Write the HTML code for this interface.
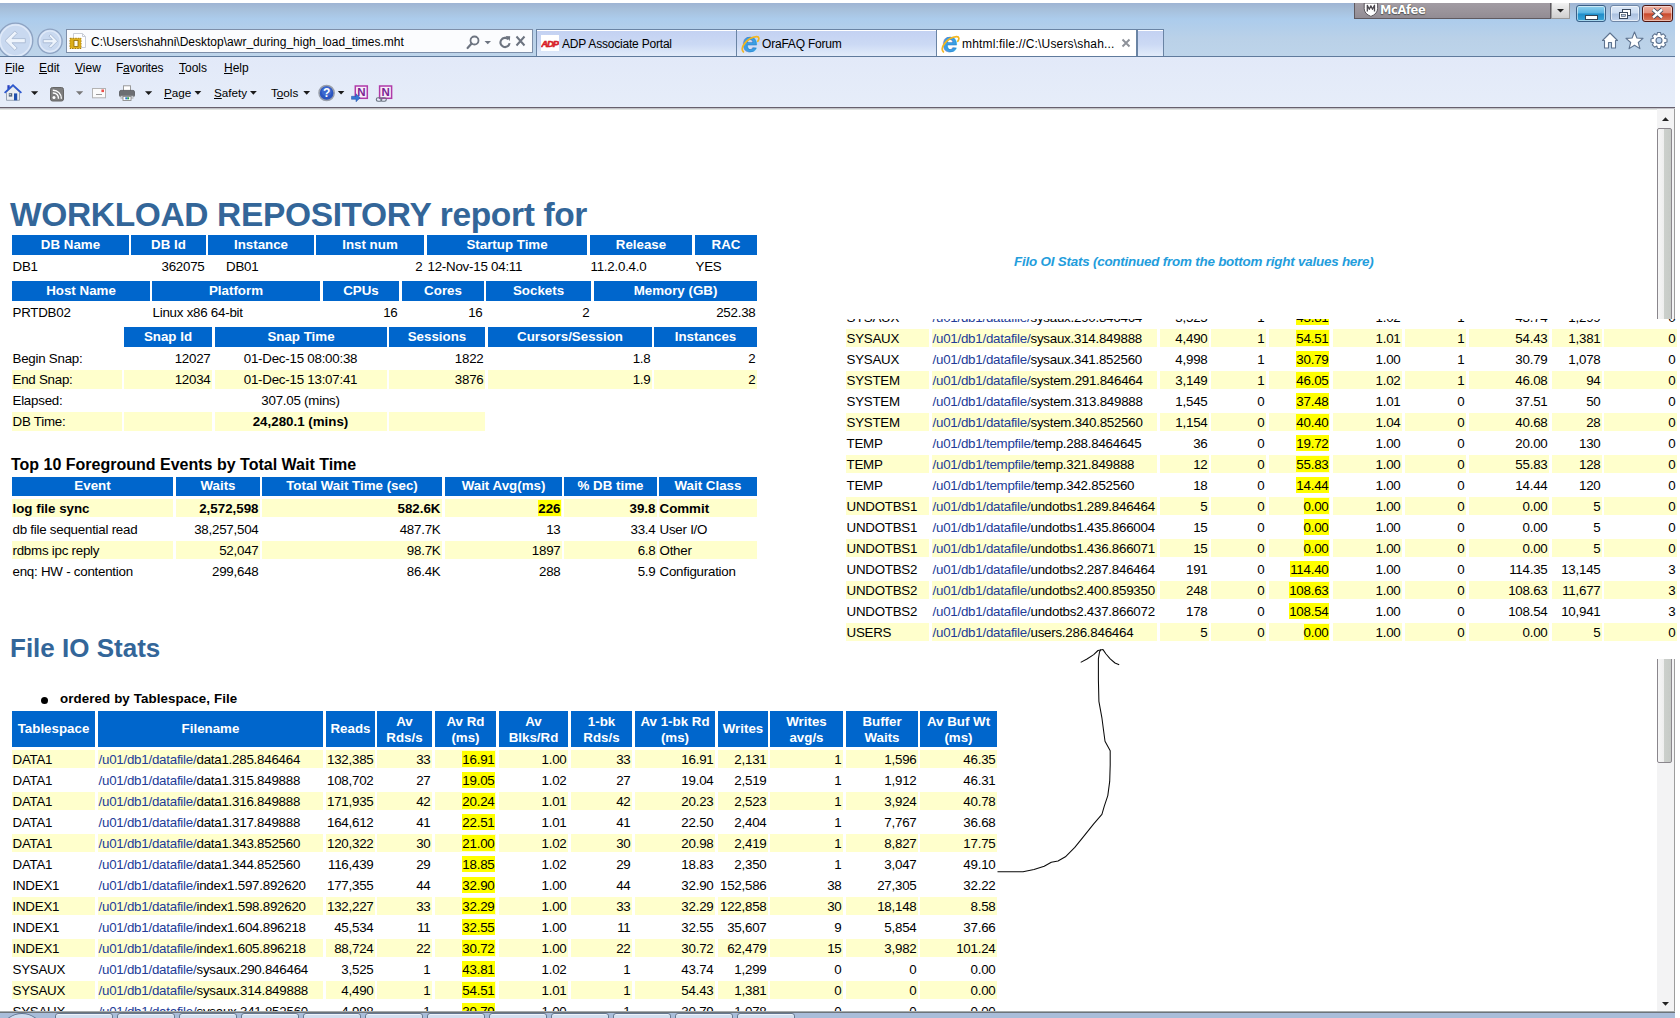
<!DOCTYPE html>
<html lang="en"><head><meta charset="utf-8"><title>AWR report - Internet Explorer</title>
<style>
html,body{margin:0;padding:0;background:#fff;}
body{width:1680px;height:1018px;overflow:hidden;position:relative;font-family:"Liberation Sans",sans-serif;font-size:13.33px;color:#000;}
.abs{position:absolute;}
#win{position:absolute;left:0;top:3px;width:1675px;height:1015px;overflow:hidden;background:#fff;}
/* ---------- chrome ---------- */
#titlebg{position:absolute;left:0;top:0;width:1675px;height:54px;background:linear-gradient(#9eb4d3 0px,#a6bfda 6px,#acccec 16px,#bad1e8 36px,#bdd4ea 54px);}
#toolbg{position:absolute;left:0;top:54px;width:1675px;height:50px;background:linear-gradient(#e2e9f8,#e6edf9);}
#chromeline{position:absolute;left:0;top:104px;width:1675px;height:3px;background:linear-gradient(#67606c 0,#67606c 1px,#c2c2c8 1px,#c2c2c8 2px,#e2e5e2 2px);}
.ui{font-family:"Liberation Sans","DejaVu Sans",sans-serif;font-size:12px;color:#000;white-space:nowrap;}
.menu span{position:absolute;top:0;}
.menu u{text-decoration:underline;}
.tab{position:absolute;top:26px;height:27px;box-sizing:border-box;border:1px solid #6a84a4;border-bottom:none;background:linear-gradient(#ffffff 0,#ffffff 1.5px,#c4d2f2 1.5px,#cbd9f4 14px,#e2ecfa 26px);}
.tab.act{background:#fff;border-color:#6a84a4;}
.tab .t{position:absolute;left:25px;top:7px;font-size:12px;letter-spacing:-0.2px;}
/* ---------- report ---------- */
table.awr{position:absolute;border-collapse:separate;border-spacing:0;table-layout:fixed;}
table.awr th,table.awr td{box-sizing:border-box;border:0 solid transparent;background-clip:padding-box;white-space:nowrap;overflow:hidden;}
table.awr th{background-color:#0066cc;color:#fff;font-weight:bold;font-size:13.33px;padding:0 0 1px 0;text-align:center;vertical-align:middle;line-height:16px;letter-spacing:0;}
table.awr td{font-size:13.33px;letter-spacing:-0.24px;padding:0 1.5px 0 0.5px;vertical-align:top;text-align:left;}
table.awr td.r{text-align:right;}
table.awr td.c{text-align:center;}
table.awr tr.y td{background-color:#ffffcc;}
table.awr td.nb{background-color:transparent !important;}
table.awr td b{letter-spacing:0;}
.hl{background:#ffff00;box-shadow:0 -1px 0 #ffff00;}
a.lk{color:#223c98;text-decoration:none;}
</style></head><body>
<div id="win">
<div id="titlebg"></div>
<div id="toolbg"></div>
<div id="chromeline"></div>
<!-- back / forward -->
<svg class="abs" style="left:0;top:18px" width="66" height="36" viewBox="0 0 66 36">
  <circle cx="15.5" cy="19.5" r="17.300" fill="#c9d9f0" stroke="#8ea3c2" stroke-width="1.3"/>
  <circle cx="15.5" cy="19.5" r="15.400" fill="none" stroke="#dfe9f8" stroke-width="1.5"/>
  <path d="M5 19.700 L14.8 10 L17.200 12.400 L12 17.600 H25.3 V21.800 H12 L17.200 27 L14.8 29.400 Z" fill="#eef4fc" stroke="#a8b9d3" stroke-width="0.9" stroke-linejoin="round"/>
  <circle cx="50" cy="20.200" r="12.100" fill="#c9d9f0" stroke="#8ea3c2" stroke-width="1.3"/>
  <circle cx="50" cy="20.200" r="10.300" fill="none" stroke="#dfe9f8" stroke-width="1.3"/>
  <path d="M57.6 20.200 L50.700 13.300 L48.900 15.100 L52.400 18.600 H43.200 V21.800 H52.400 L48.900 25.300 L50.700 27.100 Z" fill="#eef4fc" stroke="#a8b9d3" stroke-width="0.9" stroke-linejoin="round"/>
</svg>
<!-- address bar -->
<div class="abs" style="left:66px;top:26px;width:467px;height:24px;box-sizing:border-box;border:1px solid #7e8fa9;background:#fbfcfe;"></div>
<svg class="abs" style="left:69px;top:29px" width="18" height="18" viewBox="0 0 18 18">
  <path d="M4.500 1.500 H13.500 L16.500 4.500 V15.500 H4.500 Z" fill="#ffffff" stroke="#c9cdd6" stroke-width="1"/>
  <path d="M13.500 1.500 V4.500 H16.500" fill="none" stroke="#c9cdd6" stroke-width="1"/>
  <rect x="1" y="6.300" width="11" height="10.200" fill="#d9a916" stroke="#a97d08" stroke-width="1" stroke-dasharray="1.600 1"/>
  <rect x="1.600" y="6.900" width="9.800" height="9" fill="#dcae1a"/>
  <rect x="5" y="8.500" width="4" height="6" fill="#fffdf2" stroke="#8f6a06" stroke-width="0.8"/>
</svg>
<div class="abs ui" style="left:91px;top:32px;font-size:12px;">C:\Users\shahni\Desktop\awr_during_high_load_times.mht</div>
<svg class="abs" style="left:462px;top:30px" width="68" height="18" viewBox="0 0 68 18">
  <circle cx="12.5" cy="7.5" r="4" fill="none" stroke="#6d7480" stroke-width="1.8"/>
  <path d="M9.6 10.6 L5.6 15" stroke="#6d7480" stroke-width="2.2" stroke-linecap="round"/>
  <path d="M22.5 8 H29 L25.75 11.2 Z" fill="#6d7480"/>
  <path d="M46.3 6.2 A4.6 4.6 0 1 0 47.6 10.2" fill="none" stroke="#6d7480" stroke-width="2.100"/>
  <path d="M43.5 3 L48.2 3.2 L47.8 8 Z" fill="#6d7480"/>
  <path d="M54.5 3.5 L62.5 12.5 M62.5 3.5 L54.5 12.5" stroke="#6d7480" stroke-width="2"/>
</svg>
<!-- tabs -->
<div class="abs" style="left:0;top:53px;width:1675px;height:1px;background:#5f7a9c;"></div>
<div class="tab" style="left:536px;width:201px;"><div class="t ui">ADP Associate Portal</div></div>
<div class="tab" style="left:736px;width:201px;"><div class="t ui">OraFAQ Forum</div></div>
<div class="tab act" style="left:936px;width:201px;"><div class="t ui" style="letter-spacing:0.18px">mhtml:file://C:\Users\shah...</div></div>
<div class="tab" style="left:1137px;width:27px;"></div>
<!-- ADP logo -->
<svg class="abs" style="left:541px;top:32px" width="18" height="16" viewBox="0 0 18 16">
  <rect width="18" height="16" fill="#fff"/>
  <text x="8.600" y="12.300" font-family="Liberation Sans,sans-serif" font-size="9.500" font-weight="bold" font-style="italic" fill="#d81f2a" stroke="#d81f2a" stroke-width="0.600" text-anchor="middle" letter-spacing="-1.200">ADP</text>
</svg>
<!-- IE logos -->
<svg class="abs" style="left:741px;top:32px" width="19" height="19" viewBox="0 0 19 19">
  <text x="1.200" y="16.600" font-family="Liberation Sans,sans-serif" font-size="27" font-weight="bold" fill="#3c9fe3">e</text>
  <text x="1.200" y="16.600" font-family="Liberation Sans,sans-serif" font-size="27" font-weight="bold" fill="none" stroke="#1e78c8" stroke-width="0.500">e</text>
  <path d="M2.400 16.800 C-1.500 13 6 2.500 15.500 1.600 C18.500 1.500 18.300 4.300 16.800 6.300" fill="none" stroke="#f3b61f" stroke-width="1.700" stroke-linecap="round"/>
</svg>
<svg class="abs" style="left:941px;top:32px" width="19" height="19" viewBox="0 0 19 19">
  <text x="1.200" y="16.600" font-family="Liberation Sans,sans-serif" font-size="27" font-weight="bold" fill="#3c9fe3">e</text>
  <text x="1.200" y="16.600" font-family="Liberation Sans,sans-serif" font-size="27" font-weight="bold" fill="none" stroke="#1e78c8" stroke-width="0.500">e</text>
  <path d="M2.400 16.800 C-1.500 13 6 2.500 15.500 1.600 C18.500 1.500 18.300 4.300 16.800 6.300" fill="none" stroke="#f3b61f" stroke-width="1.700" stroke-linecap="round"/>
</svg>
<svg class="abs" style="left:1120px;top:34px" width="12" height="12" viewBox="0 0 12 12">
  <path d="M2.500 2.500 L9.500 9.500 M9.500 2.500 L2.500 9.500" stroke="#8d9199" stroke-width="1.900"/>
</svg>
<!-- McAfee bar -->
<div class="abs" style="left:1354px;top:0;width:197px;height:16px;background:linear-gradient(#a29ca3,#9a949b 55%,#928c93);border:1px solid #5f5a60;border-top:none;box-sizing:border-box;"></div>
<svg class="abs" style="left:1363px;top:0" width="16" height="15" viewBox="0 0 16 15">
  <path d="M1.200 0 H14.600 V5.500 Q14.600 10.800 7.900 13.400 Q1.200 10.800 1.200 5.500 Z" fill="#ffffff" stroke="#5a565c" stroke-width="1"/>
  <path d="M4.300 8.600 V2.300 L6.300 6.300 L7.900 2.800 L9.500 6.300 L11.500 2.300 V8.600" fill="none" stroke="#4a464c" stroke-width="1.300" stroke-linejoin="round"/>
</svg>
<div class="abs" style="left:1380px;top:0px;font-family:'DejaVu Sans','Liberation Sans',sans-serif;font-weight:bold;font-size:11.5px;color:#fff;letter-spacing:-0.4px;text-shadow:0 0 1px #444,0 1px 1px #555;">McAfee</div>
<div class="abs" style="left:1551px;top:0;width:19px;height:16px;background:linear-gradient(#f2f2f2,#cfcfcf);border:1px solid #9a9a9a;border-top:none;box-sizing:border-box;"></div>
<svg class="abs" style="left:1556px;top:5px" width="9" height="6" viewBox="0 0 9 6"><path d="M1 1 H8 L4.5 4.6 Z" fill="#222"/></svg>
<!-- window buttons -->
<div class="abs" style="left:1576px;top:2px;width:30px;height:17px;box-sizing:border-box;border:1px solid #3a5f86;border-radius:3px;background:linear-gradient(#8fd0ee 0,#56b3e2 48%,#1f8cc9 52%,#3aa6d8 100%);box-shadow:inset 0 0 0 1px rgba(255,255,255,.55);"></div>
<div class="abs" style="left:1585px;top:12px;width:11px;height:3px;background:#fff;border:1px solid #345;box-sizing:content-box;"></div>
<div class="abs" style="left:1610px;top:2px;width:30px;height:17px;box-sizing:border-box;border:1px solid #6f86a6;border-radius:3px;background:linear-gradient(#dbe7f6 0,#cddcf1 48%,#a9bfdf 52%,#c5d6ee 100%);box-shadow:inset 0 0 0 1px rgba(255,255,255,.6);"></div>
<svg class="abs" style="left:1618px;top:5px" width="14" height="12" viewBox="0 0 14 12">
  <rect x="4.5" y="1.5" width="8" height="6" fill="#fff" stroke="#3b4a5f" stroke-width="1"/>
  <rect x="1.5" y="4.5" width="8" height="6" fill="#fff" stroke="#3b4a5f" stroke-width="1"/>
  <rect x="3.5" y="6.5" width="4" height="2" fill="#b9c9e2" stroke="#3b4a5f" stroke-width="0.6"/>
</svg>
<div class="abs" style="left:1642px;top:2px;width:31px;height:17px;box-sizing:border-box;border:1px solid #4d1410;border-radius:3px;background:linear-gradient(#eeb0a1 0,#e38f7c 46%,#c9482b 52%,#d97a5e 100%);box-shadow:inset 0 0 0 1px rgba(255,255,255,.5);"></div>
<svg class="abs" style="left:1651px;top:5px" width="13" height="11" viewBox="0 0 13 11">
  <path d="M2 1.5 L11 9.5 M11 1.5 L2 9.5" stroke="#3b4a5f" stroke-width="4.2"/>
  <path d="M2 1.5 L11 9.5 M11 1.5 L2 9.5" stroke="#fff" stroke-width="2.4"/>
</svg>
<!-- home / star / gear -->
<svg class="abs" style="left:1600px;top:26px" width="72" height="24" viewBox="0 0 72 24">
  <path d="M2.5 11.5 L10 4 L17.500 11.5 H15.5 V19 H11.5 V13.500 H8.5 V19 H4.5 V11.5 Z" fill="#fff" stroke="#5e738f" stroke-width="1.1" stroke-linejoin="round"/>
  <path d="M34.5 3 L36.900 9 L43 9.4 L38.300 13.500 L39.900 19.600 L34.500 16.200 L29.100 19.600 L30.700 13.500 L26 9.4 L32.100 9 Z" fill="#fff" stroke="#5e738f" stroke-width="1.1" stroke-linejoin="round"/>
  <g transform="translate(59 11.500)">
    <path d="M-1.500 -8 H1.5 L2.200 -5.500 L4.400 -6.700 L6.700 -4.400 L5.500 -2.200 L8 -1.500 V1.500 L5.500 2.200 L6.700 4.400 L4.400 6.700 L2.200 5.500 L1.500 8 H-1.500 L-2.200 5.500 L-4.400 6.700 L-6.700 4.400 L-5.500 2.200 L-8 1.500 V-1.500 L-5.500 -2.200 L-6.700 -4.400 L-4.400 -6.700 L-2.200 -5.500 Z" fill="#fff" stroke="#5e738f" stroke-width="1.1" stroke-linejoin="round"/>
    <circle r="3" fill="#bcd4f0" stroke="#5e738f" stroke-width="1.1"/>
  </g>
</svg>
<!-- menu bar -->
<div class="abs ui menu" style="left:0;top:58px;height:16px;">
  <span style="left:5px"><u>F</u>ile</span><span style="left:39px"><u>E</u>dit</span><span style="left:75px"><u>V</u>iew</span><span style="left:116px;letter-spacing:-0.250px">F<u>a</u>vorites</span><span style="left:179px"><u>T</u>ools</span><span style="left:224px"><u>H</u>elp</span>
</div>
<!-- command bar -->
<svg class="abs" style="left:0;top:78px" width="400" height="24" viewBox="0 0 400 24">
  <!-- home -->
  <rect x="7.400" y="4.200" width="2.300" height="4" fill="#2a3fbf"/>
  <path d="M6.500 11.300 L13 5.300 L19.500 11.300 V19.300 H6.500 Z" fill="#e9edf2" stroke="#8f9bad" stroke-width="0.9"/>
  <path d="M4.600 11.800 L13 4.100 L21.400 11.800" fill="none" stroke="#2b57cf" stroke-width="1.700" stroke-linejoin="miter"/>
  <rect x="14" y="12.400" width="3.200" height="6.900" fill="#1e4fae"/>
  <rect x="8.800" y="12.200" width="3.400" height="3.400" fill="#4f6179"/>
  <rect x="9.500" y="12.900" width="1.300" height="1.300" fill="#c8d6ea"/>
  <path d="M31 10.200 H38.200 L34.600 14 Z" fill="#1a1a1a"/>
  <!-- rss -->
  <rect x="50.5" y="6.500" width="13" height="13.500" rx="2" fill="#7d7d7d" stroke="#666666" stroke-width="1"/>
  <circle cx="54" cy="16.600" r="1.500" fill="#fff"/>
  <path d="M52.800 12 A5.300 5.300 0 0 1 58.500 17.800 M52.800 9.200 A8.300 8.300 0 0 1 61.400 17.800" fill="none" stroke="#fff" stroke-width="1.400"/>
  <path d="M76 10.200 H83.200 L79.600 14 Z" fill="#777"/>
  <!-- mail -->
  <rect x="92.500" y="7.500" width="13" height="9.300" fill="#fbfbfb" stroke="#b3b3b3" stroke-width="1"/>
  <path d="M96 13.500 H102" stroke="#9a9a9a" stroke-width="1"/>
  <rect x="101.400" y="8.500" width="2.600" height="2.600" fill="#ea4e4a"/>
  <!-- printer -->
  <rect x="123.500" y="4.800" width="7" height="5.400" fill="#fff" stroke="#9a9a9a" stroke-width="1"/>
  <rect x="119.500" y="9.400" width="15" height="6.400" rx="1.500" fill="#6c6e72" stroke="#55575b" stroke-width="0.8"/>
  <rect x="120.500" y="14.800" width="13" height="3.200" fill="#c6c9ce"/>
  <rect x="123" y="15.500" width="8" height="4" fill="#fff" stroke="#8a8a8a" stroke-width="0.9"/>
  <rect x="125.300" y="16.300" width="1.900" height="2" fill="#2a6fd0"/>
  <rect x="127.200" y="16.300" width="1.900" height="2" fill="#2a9a4a"/>
  <path d="M145 10.200 H152.200 L148.600 14 Z" fill="#1a1a1a"/>
  <!-- arrows after text -->
  <path d="M194.500 10 H201.300 L197.900 13.700 Z" fill="#1a1a1a"/>
  <path d="M250 10 H256.800 L253.400 13.700 Z" fill="#1a1a1a"/>
  <path d="M303.300 10 H310.100 L306.700 13.700 Z" fill="#1a1a1a"/>
  <!-- help -->
  <circle cx="326.600" cy="12" r="7.600" fill="#2b55c0" stroke="#9aa0ab" stroke-width="1.500"/>
  <circle cx="326.600" cy="10.500" r="5" fill="#4a78dd" opacity="0.55"/>
  <text x="326.600" y="16.300" font-family="Liberation Sans,sans-serif" font-size="12" font-weight="bold" fill="#fff" text-anchor="middle">?</text>
  <path d="M337.800 10 H344.400 L341.100 13.600 Z" fill="#1a1a1a"/>
  <!-- onenote send -->
  <rect x="355.300" y="5" width="12" height="12.300" fill="#f7eefa" stroke="#b03aa8" stroke-width="1.500"/>
  <text x="361.300" y="15.300" font-family="Liberation Sans,sans-serif" font-size="11.500" font-weight="bold" fill="#7a2492" text-anchor="middle">N</text>
  <path d="M351.500 15.300 H356 V12.800 L360.200 16.800 L356 20.800 V18.300 H351.500 Z" fill="#3576d6" stroke="#1f4fa3" stroke-width="0.500"/>
  <!-- onenote linked -->
  <rect x="379.600" y="5" width="12" height="12.300" fill="#f7eefa" stroke="#b03aa8" stroke-width="1.500"/>
  <text x="385.600" y="15.300" font-family="Liberation Sans,sans-serif" font-size="11.500" font-weight="bold" fill="#7a2492" text-anchor="middle">N</text>
  <rect x="376.300" y="16.800" width="5.500" height="3.400" rx="1.700" fill="none" stroke="#6b7480" stroke-width="1.100"/>
  <rect x="380.800" y="16.800" width="5.500" height="3.400" rx="1.700" fill="none" stroke="#6b7480" stroke-width="1.100"/>
</svg>
<div class="abs ui" style="left:164px;top:83px;font-size:11.7px;"><u>P</u>age</div>
<div class="abs ui" style="left:214px;top:83px;font-size:11.7px;"><u>S</u>afety</div>
<div class="abs ui" style="left:271px;top:83px;font-size:11.7px;">T<u>o</u>ols</div>
</div>
<div id="page" class="abs" style="left:0;top:0;width:1680px;height:1011px;overflow:hidden;">
<div class="abs" style="left:1657px;top:109px;width:18px;height:902px;background:#f3f3f4;border-right:1px solid #9c9c9c;box-sizing:border-box;"></div>
<svg class="abs" style="left:1661px;top:116px" width="9" height="6" viewBox="0 0 9 6"><path d="M1 5 L4.5 1.200 L8 5 Z" fill="#222"/></svg>
<div class="abs" style="left:1657px;top:128px;width:15px;height:635px;box-sizing:border-box;border:1px solid #8a868c;border-radius:2px;background:linear-gradient(90deg,#f6f6f6 0,#eeeeee 45%,#cbcfcb 50%,#c6cac6 100%);"></div>
<svg class="abs" style="left:1661px;top:1001px" width="9" height="6" viewBox="0 0 9 6"><path d="M1 1 H8 L4.500 4.800 Z" fill="#222"/></svg>
<div class="abs" id="h1" style="left:10px;top:195.5px;font-size:33.5px;letter-spacing:-0.35px;font-weight:bold;color:#336699;line-height:38px;white-space:nowrap;">WORKLOAD REPOSITORY report for</div>
<table class="awr" style="left:12px;top:235px;width:745px;"><colgroup><col style="width:119px"><col style="width:77px"><col style="width:108px"><col style="width:111px"><col style="width:163px"><col style="width:105px"><col style="width:62px"></colgroup><tr style="height:22px"><th style="height:22px;border-bottom-width:2px;border-right-width:2px;">DB Name</th><th style="height:22px;border-bottom-width:2px;border-right-width:2px;">DB Id</th><th style="height:22px;border-bottom-width:2px;border-right-width:2px;">Instance</th><th style="height:22px;border-bottom-width:2px;border-right-width:3px;">Inst num</th><th style="height:22px;border-bottom-width:2px;border-right-width:3px;">Startup Time</th><th style="height:22px;border-bottom-width:2px;border-right-width:3px;">Release</th><th style="height:22px;border-bottom-width:2px;">RAC</th></tr><tr style="height:20px"><td style="height:20px;border-right-width:2px;line-height:20px;">DB1</td><td class="r" style="height:20px;border-right-width:2px;line-height:20px;">362075</td><td style="height:20px;border-right-width:2px;line-height:20px;padding-left:18px;">DB01</td><td class="r" style="height:20px;border-right-width:3px;line-height:20px;">2</td><td style="height:20px;border-right-width:3px;line-height:20px;">12-Nov-15 04:11</td><td style="height:20px;border-right-width:3px;line-height:20px;">11.2.0.4.0</td><td style="height:20px;line-height:20px;">YES</td></tr></table>
<table class="awr" style="left:12px;top:281px;width:745px;"><colgroup><col style="width:140px"><col style="width:171px"><col style="width:79px"><col style="width:84px"><col style="width:108px"><col style="width:163px"></colgroup><tr style="height:22px"><th style="height:22px;border-bottom-width:2px;border-right-width:2px;">Host Name</th><th style="height:22px;border-bottom-width:2px;border-right-width:3px;">Platform</th><th style="height:22px;border-bottom-width:2px;border-right-width:3px;">CPUs</th><th style="height:22px;border-bottom-width:2px;border-right-width:2px;">Cores</th><th style="height:22px;border-bottom-width:2px;border-right-width:3px;">Sockets</th><th style="height:22px;border-bottom-width:2px;">Memory (GB)</th></tr><tr style="height:20px"><td style="height:20px;border-right-width:2px;line-height:20px;">PRTDB02</td><td style="height:20px;border-right-width:3px;line-height:20px;">Linux x86 64-bit</td><td class="r" style="height:20px;border-right-width:3px;line-height:20px;">16</td><td class="r" style="height:20px;border-right-width:2px;line-height:20px;">16</td><td class="r" style="height:20px;border-right-width:3px;line-height:20px;">2</td><td class="r" style="height:20px;line-height:20px;">252.38</td></tr></table>
<table class="awr" style="left:12px;top:327px;width:745px;"><colgroup><col style="width:112px"><col style="width:91px"><col style="width:174px"><col style="width:99px"><col style="width:166px"><col style="width:103px"></colgroup><tr style="height:22px"><th style="height:22px;border-bottom-width:2px;border-right-width:2px;background-color:transparent;"></th><th style="height:22px;border-bottom-width:2px;border-right-width:3px;">Snap Id</th><th style="height:22px;border-bottom-width:2px;border-right-width:2px;">Snap Time</th><th style="height:22px;border-bottom-width:2px;border-right-width:3px;">Sessions</th><th style="height:22px;border-bottom-width:2px;border-right-width:2px;">Cursors/Session</th><th style="height:22px;border-bottom-width:2px;">Instances</th></tr><tr style="height:21px"><td style="height:21px;border-bottom-width:2px;border-right-width:2px;line-height:19px;">Begin Snap:</td><td class="r" style="height:21px;border-bottom-width:2px;border-right-width:3px;line-height:19px;">12027</td><td class="c" style="height:21px;border-bottom-width:2px;border-right-width:2px;line-height:19px;">01-Dec-15 08:00:38</td><td class="r" style="height:21px;border-bottom-width:2px;border-right-width:3px;line-height:19px;">1822</td><td class="r" style="height:21px;border-bottom-width:2px;border-right-width:2px;line-height:19px;">1.8</td><td class="r" style="height:21px;border-bottom-width:2px;line-height:19px;">2</td></tr><tr class="y" style="height:21px"><td style="height:21px;border-bottom-width:2px;border-right-width:2px;line-height:19px;">End Snap:</td><td class="r" style="height:21px;border-bottom-width:2px;border-right-width:3px;line-height:19px;">12034</td><td class="c" style="height:21px;border-bottom-width:2px;border-right-width:2px;line-height:19px;">01-Dec-15 13:07:41</td><td class="r" style="height:21px;border-bottom-width:2px;border-right-width:3px;line-height:19px;">3876</td><td class="r" style="height:21px;border-bottom-width:2px;border-right-width:2px;line-height:19px;">1.9</td><td class="r" style="height:21px;border-bottom-width:2px;line-height:19px;">2</td></tr><tr style="height:21px"><td style="height:21px;border-bottom-width:2px;border-right-width:2px;line-height:19px;">Elapsed:</td><td style="height:21px;border-bottom-width:2px;border-right-width:3px;line-height:19px;">&nbsp;</td><td class="c" style="height:21px;border-bottom-width:2px;border-right-width:2px;line-height:19px;">307.05 (mins)</td><td style="height:21px;border-bottom-width:2px;border-right-width:3px;line-height:19px;">&nbsp;</td><td style="height:21px;border-bottom-width:2px;border-right-width:2px;line-height:19px;">&nbsp;</td><td style="height:21px;border-bottom-width:2px;line-height:19px;">&nbsp;</td></tr><tr class="y" style="height:19px"><td style="height:19px;border-right-width:2px;line-height:19px;">DB Time:</td><td style="height:19px;border-right-width:3px;line-height:19px;">&nbsp;</td><td class="c" style="height:19px;border-right-width:2px;line-height:19px;"><b>24,280.1 (mins)</b></td><td style="height:19px;border-right-width:3px;line-height:19px;">&nbsp;</td><td class="nb" style="height:19px;border-right-width:2px;line-height:19px;">&nbsp;</td><td class="nb" style="height:19px;line-height:19px;">&nbsp;</td></tr></table>
<div class="abs" id="t10" style="left:11px;top:455px;font-size:16px;font-weight:bold;line-height:19px;white-space:nowrap;">Top 10 Foreground Events by Total Wait Time</div>
<table class="awr" style="left:12px;top:477px;width:745px;"><colgroup><col style="width:164px"><col style="width:86px"><col style="width:183px"><col style="width:119px"><col style="width:95px"><col style="width:98px"></colgroup><tr style="height:22px"><th style="height:22px;border-bottom-width:3px;border-right-width:3px;">Event</th><th style="height:22px;border-bottom-width:3px;border-right-width:2px;">Waits</th><th style="height:22px;border-bottom-width:3px;border-right-width:3px;">Total Wait Time (sec)</th><th style="height:22px;border-bottom-width:3px;border-right-width:2px;">Wait Avg(ms)</th><th style="height:22px;border-bottom-width:3px;border-right-width:2px;">% DB time</th><th style="height:22px;border-bottom-width:3px;">Wait Class</th></tr><tr class="y" style="height:21px"><td style="height:21px;border-bottom-width:2px;padding-top:1px;box-shadow:inset 0 -1px 0 #fff;border-right-width:3px;line-height:18px;"><b>log file sync</b></td><td class="r" style="height:21px;border-bottom-width:2px;padding-top:1px;box-shadow:inset 0 -1px 0 #fff;border-right-width:2px;line-height:18px;"><b>2,572,598</b></td><td class="r" style="height:21px;border-bottom-width:2px;padding-top:1px;box-shadow:inset 0 -1px 0 #fff;border-right-width:3px;line-height:18px;"><b>582.6K</b></td><td class="r" style="height:21px;border-bottom-width:2px;padding-top:1px;box-shadow:inset 0 -1px 0 #fff;border-right-width:2px;line-height:18px;"><b class="hl">226</b></td><td class="r" style="height:21px;border-bottom-width:2px;padding-top:1px;box-shadow:inset 0 -1px 0 #fff;border-right-width:2px;line-height:18px;"><b>39.8</b></td><td style="height:21px;border-bottom-width:2px;padding-top:1px;box-shadow:inset 0 -1px 0 #fff;line-height:18px;"><b>Commit</b></td></tr><tr style="height:21px"><td style="height:21px;border-bottom-width:2px;padding-top:1px;box-shadow:inset 0 -1px 0 #fff;border-right-width:3px;line-height:18px;">db file sequential read</td><td class="r" style="height:21px;border-bottom-width:2px;padding-top:1px;box-shadow:inset 0 -1px 0 #fff;border-right-width:2px;line-height:18px;">38,257,504</td><td class="r" style="height:21px;border-bottom-width:2px;padding-top:1px;box-shadow:inset 0 -1px 0 #fff;border-right-width:3px;line-height:18px;">487.7K</td><td class="r" style="height:21px;border-bottom-width:2px;padding-top:1px;box-shadow:inset 0 -1px 0 #fff;border-right-width:2px;line-height:18px;">13</td><td class="r" style="height:21px;border-bottom-width:2px;padding-top:1px;box-shadow:inset 0 -1px 0 #fff;border-right-width:2px;line-height:18px;">33.4</td><td style="height:21px;border-bottom-width:2px;padding-top:1px;box-shadow:inset 0 -1px 0 #fff;line-height:18px;">User I/O</td></tr><tr class="y" style="height:21px"><td style="height:21px;border-bottom-width:2px;padding-top:1px;box-shadow:inset 0 -1px 0 #fff;border-right-width:3px;line-height:18px;">rdbms ipc reply</td><td class="r" style="height:21px;border-bottom-width:2px;padding-top:1px;box-shadow:inset 0 -1px 0 #fff;border-right-width:2px;line-height:18px;">52,047</td><td class="r" style="height:21px;border-bottom-width:2px;padding-top:1px;box-shadow:inset 0 -1px 0 #fff;border-right-width:3px;line-height:18px;">98.7K</td><td class="r" style="height:21px;border-bottom-width:2px;padding-top:1px;box-shadow:inset 0 -1px 0 #fff;border-right-width:2px;line-height:18px;">1897</td><td class="r" style="height:21px;border-bottom-width:2px;padding-top:1px;box-shadow:inset 0 -1px 0 #fff;border-right-width:2px;line-height:18px;">6.8</td><td style="height:21px;border-bottom-width:2px;padding-top:1px;box-shadow:inset 0 -1px 0 #fff;line-height:18px;">Other</td></tr><tr style="height:19px"><td style="height:19px;padding-top:1px;box-shadow:inset 0 -1px 0 #fff;border-right-width:3px;line-height:18px;">enq: HW - contention</td><td class="r" style="height:19px;padding-top:1px;box-shadow:inset 0 -1px 0 #fff;border-right-width:2px;line-height:18px;">299,648</td><td class="r" style="height:19px;padding-top:1px;box-shadow:inset 0 -1px 0 #fff;border-right-width:3px;line-height:18px;">86.4K</td><td class="r" style="height:19px;padding-top:1px;box-shadow:inset 0 -1px 0 #fff;border-right-width:2px;line-height:18px;">288</td><td class="r" style="height:19px;padding-top:1px;box-shadow:inset 0 -1px 0 #fff;border-right-width:2px;line-height:18px;">5.9</td><td style="height:19px;padding-top:1px;box-shadow:inset 0 -1px 0 #fff;line-height:18px;">Configuration</td></tr></table>
<div class="abs" id="h3" style="left:10px;top:633px;font-size:26px;font-weight:bold;color:#336699;line-height:30px;white-space:nowrap;">File IO Stats</div>
<div class="abs" style="left:41px;top:696.5px;width:7px;height:7px;border-radius:50%;background:#000;"></div>
<div class="abs" id="li" style="left:60px;top:690px;font-size:13.33px;font-weight:bold;line-height:18px;white-space:nowrap;letter-spacing:0.1px;">ordered by Tablespace, File</div>
<table class="awr" style="left:12px;top:711px;width:985px;"><colgroup><col style="width:86px"><col style="width:228px"><col style="width:51px"><col style="width:58px"><col style="width:64px"><col style="width:72px"><col style="width:64px"><col style="width:83px"><col style="width:52px"><col style="width:76px"><col style="width:74px"><col style="width:77px"></colgroup><tr style="height:39px"><th style="height:39px;border-bottom-width:3px;border-right-width:3px;">Tablespace</th><th style="height:39px;border-bottom-width:3px;border-right-width:3px;">Filename</th><th style="height:39px;border-bottom-width:3px;border-right-width:2px;">Reads</th><th style="height:39px;border-bottom-width:3px;border-right-width:3px;padding:1px 0 0 0;">Av<br>Rds/s</th><th style="height:39px;border-bottom-width:3px;border-right-width:3px;padding:1px 0 0 0;">Av Rd<br>(ms)</th><th style="height:39px;border-bottom-width:3px;border-right-width:3px;padding:1px 0 0 0;">Av<br>Blks/Rd</th><th style="height:39px;border-bottom-width:3px;border-right-width:3px;padding:1px 0 0 0;">1-bk<br>Rds/s</th><th style="height:39px;border-bottom-width:3px;border-right-width:3px;padding:1px 0 0 0;">Av 1-bk Rd<br>(ms)</th><th style="height:39px;border-bottom-width:3px;border-right-width:2px;">Writes</th><th style="height:39px;border-bottom-width:3px;border-right-width:3px;padding:1px 0 0 0;">Writes<br>avg/s</th><th style="height:39px;border-bottom-width:3px;border-right-width:2px;padding:1px 0 0 0;">Buffer<br>Waits</th><th style="height:39px;border-bottom-width:3px;padding:1px 0 0 0;">Av Buf Wt<br>(ms)</th></tr><tr class="y" style="height:21px"><td style="height:21px;border-bottom-width:2px;padding-top:1px;box-shadow:inset 0 -1px 0 #fff;border-right-width:3px;line-height:18px;">DATA1</td><td style="height:21px;border-bottom-width:2px;padding-top:1px;box-shadow:inset 0 -1px 0 #fff;border-right-width:3px;line-height:18px;"><a class="lk">/u01/db1/datafile/</a>data1.285.846464</td><td class="r" style="height:21px;border-bottom-width:2px;padding-top:1px;box-shadow:inset 0 -1px 0 #fff;border-right-width:2px;line-height:18px;">132,385</td><td class="r" style="height:21px;border-bottom-width:2px;padding-top:1px;box-shadow:inset 0 -1px 0 #fff;border-right-width:3px;line-height:18px;">33</td><td class="r" style="height:21px;border-bottom-width:2px;padding-top:1px;box-shadow:inset 0 -1px 0 #fff;border-right-width:3px;line-height:18px;"><span class="hl">16.91</span></td><td class="r" style="height:21px;border-bottom-width:2px;padding-top:1px;box-shadow:inset 0 -1px 0 #fff;border-right-width:3px;line-height:18px;">1.00</td><td class="r" style="height:21px;border-bottom-width:2px;padding-top:1px;box-shadow:inset 0 -1px 0 #fff;border-right-width:3px;line-height:18px;">33</td><td class="r" style="height:21px;border-bottom-width:2px;padding-top:1px;box-shadow:inset 0 -1px 0 #fff;border-right-width:3px;line-height:18px;">16.91</td><td class="r" style="height:21px;border-bottom-width:2px;padding-top:1px;box-shadow:inset 0 -1px 0 #fff;border-right-width:2px;line-height:18px;">2,131</td><td class="r" style="height:21px;border-bottom-width:2px;padding-top:1px;box-shadow:inset 0 -1px 0 #fff;border-right-width:3px;line-height:18px;">1</td><td class="r" style="height:21px;border-bottom-width:2px;padding-top:1px;box-shadow:inset 0 -1px 0 #fff;border-right-width:2px;line-height:18px;">1,596</td><td class="r" style="height:21px;border-bottom-width:2px;padding-top:1px;box-shadow:inset 0 -1px 0 #fff;line-height:18px;">46.35</td></tr><tr style="height:21px"><td style="height:21px;border-bottom-width:2px;padding-top:1px;box-shadow:inset 0 -1px 0 #fff;border-right-width:3px;line-height:18px;">DATA1</td><td style="height:21px;border-bottom-width:2px;padding-top:1px;box-shadow:inset 0 -1px 0 #fff;border-right-width:3px;line-height:18px;"><a class="lk">/u01/db1/datafile/</a>data1.315.849888</td><td class="r" style="height:21px;border-bottom-width:2px;padding-top:1px;box-shadow:inset 0 -1px 0 #fff;border-right-width:2px;line-height:18px;">108,702</td><td class="r" style="height:21px;border-bottom-width:2px;padding-top:1px;box-shadow:inset 0 -1px 0 #fff;border-right-width:3px;line-height:18px;">27</td><td class="r" style="height:21px;border-bottom-width:2px;padding-top:1px;box-shadow:inset 0 -1px 0 #fff;border-right-width:3px;line-height:18px;"><span class="hl">19.05</span></td><td class="r" style="height:21px;border-bottom-width:2px;padding-top:1px;box-shadow:inset 0 -1px 0 #fff;border-right-width:3px;line-height:18px;">1.02</td><td class="r" style="height:21px;border-bottom-width:2px;padding-top:1px;box-shadow:inset 0 -1px 0 #fff;border-right-width:3px;line-height:18px;">27</td><td class="r" style="height:21px;border-bottom-width:2px;padding-top:1px;box-shadow:inset 0 -1px 0 #fff;border-right-width:3px;line-height:18px;">19.04</td><td class="r" style="height:21px;border-bottom-width:2px;padding-top:1px;box-shadow:inset 0 -1px 0 #fff;border-right-width:2px;line-height:18px;">2,519</td><td class="r" style="height:21px;border-bottom-width:2px;padding-top:1px;box-shadow:inset 0 -1px 0 #fff;border-right-width:3px;line-height:18px;">1</td><td class="r" style="height:21px;border-bottom-width:2px;padding-top:1px;box-shadow:inset 0 -1px 0 #fff;border-right-width:2px;line-height:18px;">1,912</td><td class="r" style="height:21px;border-bottom-width:2px;padding-top:1px;box-shadow:inset 0 -1px 0 #fff;line-height:18px;">46.31</td></tr><tr class="y" style="height:21px"><td style="height:21px;border-bottom-width:2px;padding-top:1px;box-shadow:inset 0 -1px 0 #fff;border-right-width:3px;line-height:18px;">DATA1</td><td style="height:21px;border-bottom-width:2px;padding-top:1px;box-shadow:inset 0 -1px 0 #fff;border-right-width:3px;line-height:18px;"><a class="lk">/u01/db1/datafile/</a>data1.316.849888</td><td class="r" style="height:21px;border-bottom-width:2px;padding-top:1px;box-shadow:inset 0 -1px 0 #fff;border-right-width:2px;line-height:18px;">171,935</td><td class="r" style="height:21px;border-bottom-width:2px;padding-top:1px;box-shadow:inset 0 -1px 0 #fff;border-right-width:3px;line-height:18px;">42</td><td class="r" style="height:21px;border-bottom-width:2px;padding-top:1px;box-shadow:inset 0 -1px 0 #fff;border-right-width:3px;line-height:18px;"><span class="hl">20.24</span></td><td class="r" style="height:21px;border-bottom-width:2px;padding-top:1px;box-shadow:inset 0 -1px 0 #fff;border-right-width:3px;line-height:18px;">1.01</td><td class="r" style="height:21px;border-bottom-width:2px;padding-top:1px;box-shadow:inset 0 -1px 0 #fff;border-right-width:3px;line-height:18px;">42</td><td class="r" style="height:21px;border-bottom-width:2px;padding-top:1px;box-shadow:inset 0 -1px 0 #fff;border-right-width:3px;line-height:18px;">20.23</td><td class="r" style="height:21px;border-bottom-width:2px;padding-top:1px;box-shadow:inset 0 -1px 0 #fff;border-right-width:2px;line-height:18px;">2,523</td><td class="r" style="height:21px;border-bottom-width:2px;padding-top:1px;box-shadow:inset 0 -1px 0 #fff;border-right-width:3px;line-height:18px;">1</td><td class="r" style="height:21px;border-bottom-width:2px;padding-top:1px;box-shadow:inset 0 -1px 0 #fff;border-right-width:2px;line-height:18px;">3,924</td><td class="r" style="height:21px;border-bottom-width:2px;padding-top:1px;box-shadow:inset 0 -1px 0 #fff;line-height:18px;">40.78</td></tr><tr style="height:21px"><td style="height:21px;border-bottom-width:2px;padding-top:1px;box-shadow:inset 0 -1px 0 #fff;border-right-width:3px;line-height:18px;">DATA1</td><td style="height:21px;border-bottom-width:2px;padding-top:1px;box-shadow:inset 0 -1px 0 #fff;border-right-width:3px;line-height:18px;"><a class="lk">/u01/db1/datafile/</a>data1.317.849888</td><td class="r" style="height:21px;border-bottom-width:2px;padding-top:1px;box-shadow:inset 0 -1px 0 #fff;border-right-width:2px;line-height:18px;">164,612</td><td class="r" style="height:21px;border-bottom-width:2px;padding-top:1px;box-shadow:inset 0 -1px 0 #fff;border-right-width:3px;line-height:18px;">41</td><td class="r" style="height:21px;border-bottom-width:2px;padding-top:1px;box-shadow:inset 0 -1px 0 #fff;border-right-width:3px;line-height:18px;"><span class="hl">22.51</span></td><td class="r" style="height:21px;border-bottom-width:2px;padding-top:1px;box-shadow:inset 0 -1px 0 #fff;border-right-width:3px;line-height:18px;">1.01</td><td class="r" style="height:21px;border-bottom-width:2px;padding-top:1px;box-shadow:inset 0 -1px 0 #fff;border-right-width:3px;line-height:18px;">41</td><td class="r" style="height:21px;border-bottom-width:2px;padding-top:1px;box-shadow:inset 0 -1px 0 #fff;border-right-width:3px;line-height:18px;">22.50</td><td class="r" style="height:21px;border-bottom-width:2px;padding-top:1px;box-shadow:inset 0 -1px 0 #fff;border-right-width:2px;line-height:18px;">2,404</td><td class="r" style="height:21px;border-bottom-width:2px;padding-top:1px;box-shadow:inset 0 -1px 0 #fff;border-right-width:3px;line-height:18px;">1</td><td class="r" style="height:21px;border-bottom-width:2px;padding-top:1px;box-shadow:inset 0 -1px 0 #fff;border-right-width:2px;line-height:18px;">7,767</td><td class="r" style="height:21px;border-bottom-width:2px;padding-top:1px;box-shadow:inset 0 -1px 0 #fff;line-height:18px;">36.68</td></tr><tr class="y" style="height:21px"><td style="height:21px;border-bottom-width:2px;padding-top:1px;box-shadow:inset 0 -1px 0 #fff;border-right-width:3px;line-height:18px;">DATA1</td><td style="height:21px;border-bottom-width:2px;padding-top:1px;box-shadow:inset 0 -1px 0 #fff;border-right-width:3px;line-height:18px;"><a class="lk">/u01/db1/datafile/</a>data1.343.852560</td><td class="r" style="height:21px;border-bottom-width:2px;padding-top:1px;box-shadow:inset 0 -1px 0 #fff;border-right-width:2px;line-height:18px;">120,322</td><td class="r" style="height:21px;border-bottom-width:2px;padding-top:1px;box-shadow:inset 0 -1px 0 #fff;border-right-width:3px;line-height:18px;">30</td><td class="r" style="height:21px;border-bottom-width:2px;padding-top:1px;box-shadow:inset 0 -1px 0 #fff;border-right-width:3px;line-height:18px;"><span class="hl">21.00</span></td><td class="r" style="height:21px;border-bottom-width:2px;padding-top:1px;box-shadow:inset 0 -1px 0 #fff;border-right-width:3px;line-height:18px;">1.02</td><td class="r" style="height:21px;border-bottom-width:2px;padding-top:1px;box-shadow:inset 0 -1px 0 #fff;border-right-width:3px;line-height:18px;">30</td><td class="r" style="height:21px;border-bottom-width:2px;padding-top:1px;box-shadow:inset 0 -1px 0 #fff;border-right-width:3px;line-height:18px;">20.98</td><td class="r" style="height:21px;border-bottom-width:2px;padding-top:1px;box-shadow:inset 0 -1px 0 #fff;border-right-width:2px;line-height:18px;">2,419</td><td class="r" style="height:21px;border-bottom-width:2px;padding-top:1px;box-shadow:inset 0 -1px 0 #fff;border-right-width:3px;line-height:18px;">1</td><td class="r" style="height:21px;border-bottom-width:2px;padding-top:1px;box-shadow:inset 0 -1px 0 #fff;border-right-width:2px;line-height:18px;">8,827</td><td class="r" style="height:21px;border-bottom-width:2px;padding-top:1px;box-shadow:inset 0 -1px 0 #fff;line-height:18px;">17.75</td></tr><tr style="height:21px"><td style="height:21px;border-bottom-width:2px;padding-top:1px;box-shadow:inset 0 -1px 0 #fff;border-right-width:3px;line-height:18px;">DATA1</td><td style="height:21px;border-bottom-width:2px;padding-top:1px;box-shadow:inset 0 -1px 0 #fff;border-right-width:3px;line-height:18px;"><a class="lk">/u01/db1/datafile/</a>data1.344.852560</td><td class="r" style="height:21px;border-bottom-width:2px;padding-top:1px;box-shadow:inset 0 -1px 0 #fff;border-right-width:2px;line-height:18px;">116,439</td><td class="r" style="height:21px;border-bottom-width:2px;padding-top:1px;box-shadow:inset 0 -1px 0 #fff;border-right-width:3px;line-height:18px;">29</td><td class="r" style="height:21px;border-bottom-width:2px;padding-top:1px;box-shadow:inset 0 -1px 0 #fff;border-right-width:3px;line-height:18px;"><span class="hl">18.85</span></td><td class="r" style="height:21px;border-bottom-width:2px;padding-top:1px;box-shadow:inset 0 -1px 0 #fff;border-right-width:3px;line-height:18px;">1.02</td><td class="r" style="height:21px;border-bottom-width:2px;padding-top:1px;box-shadow:inset 0 -1px 0 #fff;border-right-width:3px;line-height:18px;">29</td><td class="r" style="height:21px;border-bottom-width:2px;padding-top:1px;box-shadow:inset 0 -1px 0 #fff;border-right-width:3px;line-height:18px;">18.83</td><td class="r" style="height:21px;border-bottom-width:2px;padding-top:1px;box-shadow:inset 0 -1px 0 #fff;border-right-width:2px;line-height:18px;">2,350</td><td class="r" style="height:21px;border-bottom-width:2px;padding-top:1px;box-shadow:inset 0 -1px 0 #fff;border-right-width:3px;line-height:18px;">1</td><td class="r" style="height:21px;border-bottom-width:2px;padding-top:1px;box-shadow:inset 0 -1px 0 #fff;border-right-width:2px;line-height:18px;">3,047</td><td class="r" style="height:21px;border-bottom-width:2px;padding-top:1px;box-shadow:inset 0 -1px 0 #fff;line-height:18px;">49.10</td></tr><tr style="height:21px"><td style="height:21px;border-bottom-width:2px;padding-top:1px;box-shadow:inset 0 -1px 0 #fff;border-right-width:3px;line-height:18px;">INDEX1</td><td style="height:21px;border-bottom-width:2px;padding-top:1px;box-shadow:inset 0 -1px 0 #fff;border-right-width:3px;line-height:18px;"><a class="lk">/u01/db1/datafile/</a>index1.597.892620</td><td class="r" style="height:21px;border-bottom-width:2px;padding-top:1px;box-shadow:inset 0 -1px 0 #fff;border-right-width:2px;line-height:18px;">177,355</td><td class="r" style="height:21px;border-bottom-width:2px;padding-top:1px;box-shadow:inset 0 -1px 0 #fff;border-right-width:3px;line-height:18px;">44</td><td class="r" style="height:21px;border-bottom-width:2px;padding-top:1px;box-shadow:inset 0 -1px 0 #fff;border-right-width:3px;line-height:18px;"><span class="hl">32.90</span></td><td class="r" style="height:21px;border-bottom-width:2px;padding-top:1px;box-shadow:inset 0 -1px 0 #fff;border-right-width:3px;line-height:18px;">1.00</td><td class="r" style="height:21px;border-bottom-width:2px;padding-top:1px;box-shadow:inset 0 -1px 0 #fff;border-right-width:3px;line-height:18px;">44</td><td class="r" style="height:21px;border-bottom-width:2px;padding-top:1px;box-shadow:inset 0 -1px 0 #fff;border-right-width:3px;line-height:18px;">32.90</td><td class="r" style="height:21px;border-bottom-width:2px;padding-top:1px;box-shadow:inset 0 -1px 0 #fff;border-right-width:2px;line-height:18px;">152,586</td><td class="r" style="height:21px;border-bottom-width:2px;padding-top:1px;box-shadow:inset 0 -1px 0 #fff;border-right-width:3px;line-height:18px;">38</td><td class="r" style="height:21px;border-bottom-width:2px;padding-top:1px;box-shadow:inset 0 -1px 0 #fff;border-right-width:2px;line-height:18px;">27,305</td><td class="r" style="height:21px;border-bottom-width:2px;padding-top:1px;box-shadow:inset 0 -1px 0 #fff;line-height:18px;">32.22</td></tr><tr class="y" style="height:21px"><td style="height:21px;border-bottom-width:2px;padding-top:1px;box-shadow:inset 0 -1px 0 #fff;border-right-width:3px;line-height:18px;">INDEX1</td><td style="height:21px;border-bottom-width:2px;padding-top:1px;box-shadow:inset 0 -1px 0 #fff;border-right-width:3px;line-height:18px;"><a class="lk">/u01/db1/datafile/</a>index1.598.892620</td><td class="r" style="height:21px;border-bottom-width:2px;padding-top:1px;box-shadow:inset 0 -1px 0 #fff;border-right-width:2px;line-height:18px;">132,227</td><td class="r" style="height:21px;border-bottom-width:2px;padding-top:1px;box-shadow:inset 0 -1px 0 #fff;border-right-width:3px;line-height:18px;">33</td><td class="r" style="height:21px;border-bottom-width:2px;padding-top:1px;box-shadow:inset 0 -1px 0 #fff;border-right-width:3px;line-height:18px;"><span class="hl">32.29</span></td><td class="r" style="height:21px;border-bottom-width:2px;padding-top:1px;box-shadow:inset 0 -1px 0 #fff;border-right-width:3px;line-height:18px;">1.00</td><td class="r" style="height:21px;border-bottom-width:2px;padding-top:1px;box-shadow:inset 0 -1px 0 #fff;border-right-width:3px;line-height:18px;">33</td><td class="r" style="height:21px;border-bottom-width:2px;padding-top:1px;box-shadow:inset 0 -1px 0 #fff;border-right-width:3px;line-height:18px;">32.29</td><td class="r" style="height:21px;border-bottom-width:2px;padding-top:1px;box-shadow:inset 0 -1px 0 #fff;border-right-width:2px;line-height:18px;">122,858</td><td class="r" style="height:21px;border-bottom-width:2px;padding-top:1px;box-shadow:inset 0 -1px 0 #fff;border-right-width:3px;line-height:18px;">30</td><td class="r" style="height:21px;border-bottom-width:2px;padding-top:1px;box-shadow:inset 0 -1px 0 #fff;border-right-width:2px;line-height:18px;">18,148</td><td class="r" style="height:21px;border-bottom-width:2px;padding-top:1px;box-shadow:inset 0 -1px 0 #fff;line-height:18px;">8.58</td></tr><tr style="height:21px"><td style="height:21px;border-bottom-width:2px;padding-top:1px;box-shadow:inset 0 -1px 0 #fff;border-right-width:3px;line-height:18px;">INDEX1</td><td style="height:21px;border-bottom-width:2px;padding-top:1px;box-shadow:inset 0 -1px 0 #fff;border-right-width:3px;line-height:18px;"><a class="lk">/u01/db1/datafile/</a>index1.604.896218</td><td class="r" style="height:21px;border-bottom-width:2px;padding-top:1px;box-shadow:inset 0 -1px 0 #fff;border-right-width:2px;line-height:18px;">45,534</td><td class="r" style="height:21px;border-bottom-width:2px;padding-top:1px;box-shadow:inset 0 -1px 0 #fff;border-right-width:3px;line-height:18px;">11</td><td class="r" style="height:21px;border-bottom-width:2px;padding-top:1px;box-shadow:inset 0 -1px 0 #fff;border-right-width:3px;line-height:18px;"><span class="hl">32.55</span></td><td class="r" style="height:21px;border-bottom-width:2px;padding-top:1px;box-shadow:inset 0 -1px 0 #fff;border-right-width:3px;line-height:18px;">1.00</td><td class="r" style="height:21px;border-bottom-width:2px;padding-top:1px;box-shadow:inset 0 -1px 0 #fff;border-right-width:3px;line-height:18px;">11</td><td class="r" style="height:21px;border-bottom-width:2px;padding-top:1px;box-shadow:inset 0 -1px 0 #fff;border-right-width:3px;line-height:18px;">32.55</td><td class="r" style="height:21px;border-bottom-width:2px;padding-top:1px;box-shadow:inset 0 -1px 0 #fff;border-right-width:2px;line-height:18px;">35,607</td><td class="r" style="height:21px;border-bottom-width:2px;padding-top:1px;box-shadow:inset 0 -1px 0 #fff;border-right-width:3px;line-height:18px;">9</td><td class="r" style="height:21px;border-bottom-width:2px;padding-top:1px;box-shadow:inset 0 -1px 0 #fff;border-right-width:2px;line-height:18px;">5,854</td><td class="r" style="height:21px;border-bottom-width:2px;padding-top:1px;box-shadow:inset 0 -1px 0 #fff;line-height:18px;">37.66</td></tr><tr class="y" style="height:21px"><td style="height:21px;border-bottom-width:2px;padding-top:1px;box-shadow:inset 0 -1px 0 #fff;border-right-width:3px;line-height:18px;">INDEX1</td><td style="height:21px;border-bottom-width:2px;padding-top:1px;box-shadow:inset 0 -1px 0 #fff;border-right-width:3px;line-height:18px;"><a class="lk">/u01/db1/datafile/</a>index1.605.896218</td><td class="r" style="height:21px;border-bottom-width:2px;padding-top:1px;box-shadow:inset 0 -1px 0 #fff;border-right-width:2px;line-height:18px;">88,724</td><td class="r" style="height:21px;border-bottom-width:2px;padding-top:1px;box-shadow:inset 0 -1px 0 #fff;border-right-width:3px;line-height:18px;">22</td><td class="r" style="height:21px;border-bottom-width:2px;padding-top:1px;box-shadow:inset 0 -1px 0 #fff;border-right-width:3px;line-height:18px;"><span class="hl">30.72</span></td><td class="r" style="height:21px;border-bottom-width:2px;padding-top:1px;box-shadow:inset 0 -1px 0 #fff;border-right-width:3px;line-height:18px;">1.00</td><td class="r" style="height:21px;border-bottom-width:2px;padding-top:1px;box-shadow:inset 0 -1px 0 #fff;border-right-width:3px;line-height:18px;">22</td><td class="r" style="height:21px;border-bottom-width:2px;padding-top:1px;box-shadow:inset 0 -1px 0 #fff;border-right-width:3px;line-height:18px;">30.72</td><td class="r" style="height:21px;border-bottom-width:2px;padding-top:1px;box-shadow:inset 0 -1px 0 #fff;border-right-width:2px;line-height:18px;">62,479</td><td class="r" style="height:21px;border-bottom-width:2px;padding-top:1px;box-shadow:inset 0 -1px 0 #fff;border-right-width:3px;line-height:18px;">15</td><td class="r" style="height:21px;border-bottom-width:2px;padding-top:1px;box-shadow:inset 0 -1px 0 #fff;border-right-width:2px;line-height:18px;">3,982</td><td class="r" style="height:21px;border-bottom-width:2px;padding-top:1px;box-shadow:inset 0 -1px 0 #fff;line-height:18px;">101.24</td></tr><tr style="height:21px"><td style="height:21px;border-bottom-width:2px;padding-top:1px;box-shadow:inset 0 -1px 0 #fff;border-right-width:3px;line-height:18px;">SYSAUX</td><td style="height:21px;border-bottom-width:2px;padding-top:1px;box-shadow:inset 0 -1px 0 #fff;border-right-width:3px;line-height:18px;"><a class="lk">/u01/db1/datafile/</a>sysaux.290.846464</td><td class="r" style="height:21px;border-bottom-width:2px;padding-top:1px;box-shadow:inset 0 -1px 0 #fff;border-right-width:2px;line-height:18px;">3,525</td><td class="r" style="height:21px;border-bottom-width:2px;padding-top:1px;box-shadow:inset 0 -1px 0 #fff;border-right-width:3px;line-height:18px;">1</td><td class="r" style="height:21px;border-bottom-width:2px;padding-top:1px;box-shadow:inset 0 -1px 0 #fff;border-right-width:3px;line-height:18px;"><span class="hl">43.81</span></td><td class="r" style="height:21px;border-bottom-width:2px;padding-top:1px;box-shadow:inset 0 -1px 0 #fff;border-right-width:3px;line-height:18px;">1.02</td><td class="r" style="height:21px;border-bottom-width:2px;padding-top:1px;box-shadow:inset 0 -1px 0 #fff;border-right-width:3px;line-height:18px;">1</td><td class="r" style="height:21px;border-bottom-width:2px;padding-top:1px;box-shadow:inset 0 -1px 0 #fff;border-right-width:3px;line-height:18px;">43.74</td><td class="r" style="height:21px;border-bottom-width:2px;padding-top:1px;box-shadow:inset 0 -1px 0 #fff;border-right-width:2px;line-height:18px;">1,299</td><td class="r" style="height:21px;border-bottom-width:2px;padding-top:1px;box-shadow:inset 0 -1px 0 #fff;border-right-width:3px;line-height:18px;">0</td><td class="r" style="height:21px;border-bottom-width:2px;padding-top:1px;box-shadow:inset 0 -1px 0 #fff;border-right-width:2px;line-height:18px;">0</td><td class="r" style="height:21px;border-bottom-width:2px;padding-top:1px;box-shadow:inset 0 -1px 0 #fff;line-height:18px;">0.00</td></tr><tr class="y" style="height:21px"><td style="height:21px;border-bottom-width:2px;padding-top:1px;box-shadow:inset 0 -1px 0 #fff;border-right-width:3px;line-height:18px;">SYSAUX</td><td style="height:21px;border-bottom-width:2px;padding-top:1px;box-shadow:inset 0 -1px 0 #fff;border-right-width:3px;line-height:18px;"><a class="lk">/u01/db1/datafile/</a>sysaux.314.849888</td><td class="r" style="height:21px;border-bottom-width:2px;padding-top:1px;box-shadow:inset 0 -1px 0 #fff;border-right-width:2px;line-height:18px;">4,490</td><td class="r" style="height:21px;border-bottom-width:2px;padding-top:1px;box-shadow:inset 0 -1px 0 #fff;border-right-width:3px;line-height:18px;">1</td><td class="r" style="height:21px;border-bottom-width:2px;padding-top:1px;box-shadow:inset 0 -1px 0 #fff;border-right-width:3px;line-height:18px;"><span class="hl">54.51</span></td><td class="r" style="height:21px;border-bottom-width:2px;padding-top:1px;box-shadow:inset 0 -1px 0 #fff;border-right-width:3px;line-height:18px;">1.01</td><td class="r" style="height:21px;border-bottom-width:2px;padding-top:1px;box-shadow:inset 0 -1px 0 #fff;border-right-width:3px;line-height:18px;">1</td><td class="r" style="height:21px;border-bottom-width:2px;padding-top:1px;box-shadow:inset 0 -1px 0 #fff;border-right-width:3px;line-height:18px;">54.43</td><td class="r" style="height:21px;border-bottom-width:2px;padding-top:1px;box-shadow:inset 0 -1px 0 #fff;border-right-width:2px;line-height:18px;">1,381</td><td class="r" style="height:21px;border-bottom-width:2px;padding-top:1px;box-shadow:inset 0 -1px 0 #fff;border-right-width:3px;line-height:18px;">0</td><td class="r" style="height:21px;border-bottom-width:2px;padding-top:1px;box-shadow:inset 0 -1px 0 #fff;border-right-width:2px;line-height:18px;">0</td><td class="r" style="height:21px;border-bottom-width:2px;padding-top:1px;box-shadow:inset 0 -1px 0 #fff;line-height:18px;">0.00</td></tr><tr style="height:19px"><td style="height:19px;padding-top:1px;box-shadow:inset 0 -1px 0 #fff;border-right-width:3px;line-height:18px;">SYSAUX</td><td style="height:19px;padding-top:1px;box-shadow:inset 0 -1px 0 #fff;border-right-width:3px;line-height:18px;"><a class="lk">/u01/db1/datafile/</a>sysaux.341.852560</td><td class="r" style="height:19px;padding-top:1px;box-shadow:inset 0 -1px 0 #fff;border-right-width:2px;line-height:18px;">4,998</td><td class="r" style="height:19px;padding-top:1px;box-shadow:inset 0 -1px 0 #fff;border-right-width:3px;line-height:18px;">1</td><td class="r" style="height:19px;padding-top:1px;box-shadow:inset 0 -1px 0 #fff;border-right-width:3px;line-height:18px;"><span class="hl">30.79</span></td><td class="r" style="height:19px;padding-top:1px;box-shadow:inset 0 -1px 0 #fff;border-right-width:3px;line-height:18px;">1.00</td><td class="r" style="height:19px;padding-top:1px;box-shadow:inset 0 -1px 0 #fff;border-right-width:3px;line-height:18px;">1</td><td class="r" style="height:19px;padding-top:1px;box-shadow:inset 0 -1px 0 #fff;border-right-width:3px;line-height:18px;">30.79</td><td class="r" style="height:19px;padding-top:1px;box-shadow:inset 0 -1px 0 #fff;border-right-width:2px;line-height:18px;">1,078</td><td class="r" style="height:19px;padding-top:1px;box-shadow:inset 0 -1px 0 #fff;border-right-width:3px;line-height:18px;">0</td><td class="r" style="height:19px;padding-top:1px;box-shadow:inset 0 -1px 0 #fff;border-right-width:2px;line-height:18px;">0</td><td class="r" style="height:19px;padding-top:1px;box-shadow:inset 0 -1px 0 #fff;line-height:18px;">0.00</td></tr></table>
<div class="abs" id="cap" style="left:1014px;top:253px;font-size:13.4px;font-weight:bold;font-style:italic;color:#239ddc;line-height:18px;white-space:nowrap;letter-spacing:-0.21px;">Filo OI Stats (continued from the bottom right values here)</div>
<div class="abs" id="snip" style="left:845px;top:319px;width:832px;height:340px;overflow:hidden;background:#fff;"><table class="awr" style="left:1px;top:-11px;width:985px;"><colgroup><col style="width:86px"><col style="width:228px"><col style="width:51px"><col style="width:58px"><col style="width:64px"><col style="width:72px"><col style="width:64px"><col style="width:83px"><col style="width:52px"><col style="width:76px"><col style="width:74px"><col style="width:77px"></colgroup><tr style="height:21px"><td style="height:21px;border-bottom-width:2px;padding-top:1px;box-shadow:inset 0 -1px 0 #fff;border-right-width:3px;line-height:18px;">SYSAUX</td><td style="height:21px;border-bottom-width:2px;padding-top:1px;box-shadow:inset 0 -1px 0 #fff;border-right-width:3px;line-height:18px;"><a class="lk">/u01/db1/datafile/</a>sysaux.290.846464</td><td class="r" style="height:21px;border-bottom-width:2px;padding-top:1px;box-shadow:inset 0 -1px 0 #fff;border-right-width:2px;line-height:18px;">3,525</td><td class="r" style="height:21px;border-bottom-width:2px;padding-top:1px;box-shadow:inset 0 -1px 0 #fff;border-right-width:3px;line-height:18px;">1</td><td class="r" style="height:21px;border-bottom-width:2px;padding-top:1px;box-shadow:inset 0 -1px 0 #fff;border-right-width:3px;line-height:18px;"><span class="hl">43.81</span></td><td class="r" style="height:21px;border-bottom-width:2px;padding-top:1px;box-shadow:inset 0 -1px 0 #fff;border-right-width:3px;line-height:18px;">1.02</td><td class="r" style="height:21px;border-bottom-width:2px;padding-top:1px;box-shadow:inset 0 -1px 0 #fff;border-right-width:3px;line-height:18px;">1</td><td class="r" style="height:21px;border-bottom-width:2px;padding-top:1px;box-shadow:inset 0 -1px 0 #fff;border-right-width:3px;line-height:18px;">43.74</td><td class="r" style="height:21px;border-bottom-width:2px;padding-top:1px;box-shadow:inset 0 -1px 0 #fff;border-right-width:2px;line-height:18px;">1,299</td><td class="r" style="height:21px;border-bottom-width:2px;padding-top:1px;box-shadow:inset 0 -1px 0 #fff;border-right-width:3px;line-height:18px;">0</td><td class="r" style="height:21px;border-bottom-width:2px;padding-top:1px;box-shadow:inset 0 -1px 0 #fff;border-right-width:2px;line-height:18px;">0</td><td class="r" style="height:21px;border-bottom-width:2px;padding-top:1px;box-shadow:inset 0 -1px 0 #fff;line-height:18px;">0.00</td></tr><tr class="y" style="height:21px"><td style="height:21px;border-bottom-width:2px;padding-top:1px;box-shadow:inset 0 -1px 0 #fff;border-right-width:3px;line-height:18px;">SYSAUX</td><td style="height:21px;border-bottom-width:2px;padding-top:1px;box-shadow:inset 0 -1px 0 #fff;border-right-width:3px;line-height:18px;"><a class="lk">/u01/db1/datafile/</a>sysaux.314.849888</td><td class="r" style="height:21px;border-bottom-width:2px;padding-top:1px;box-shadow:inset 0 -1px 0 #fff;border-right-width:2px;line-height:18px;">4,490</td><td class="r" style="height:21px;border-bottom-width:2px;padding-top:1px;box-shadow:inset 0 -1px 0 #fff;border-right-width:3px;line-height:18px;">1</td><td class="r" style="height:21px;border-bottom-width:2px;padding-top:1px;box-shadow:inset 0 -1px 0 #fff;border-right-width:3px;line-height:18px;"><span class="hl">54.51</span></td><td class="r" style="height:21px;border-bottom-width:2px;padding-top:1px;box-shadow:inset 0 -1px 0 #fff;border-right-width:3px;line-height:18px;">1.01</td><td class="r" style="height:21px;border-bottom-width:2px;padding-top:1px;box-shadow:inset 0 -1px 0 #fff;border-right-width:3px;line-height:18px;">1</td><td class="r" style="height:21px;border-bottom-width:2px;padding-top:1px;box-shadow:inset 0 -1px 0 #fff;border-right-width:3px;line-height:18px;">54.43</td><td class="r" style="height:21px;border-bottom-width:2px;padding-top:1px;box-shadow:inset 0 -1px 0 #fff;border-right-width:2px;line-height:18px;">1,381</td><td class="r" style="height:21px;border-bottom-width:2px;padding-top:1px;box-shadow:inset 0 -1px 0 #fff;border-right-width:3px;line-height:18px;">0</td><td class="r" style="height:21px;border-bottom-width:2px;padding-top:1px;box-shadow:inset 0 -1px 0 #fff;border-right-width:2px;line-height:18px;">0</td><td class="r" style="height:21px;border-bottom-width:2px;padding-top:1px;box-shadow:inset 0 -1px 0 #fff;line-height:18px;">0.00</td></tr><tr style="height:21px"><td style="height:21px;border-bottom-width:2px;padding-top:1px;box-shadow:inset 0 -1px 0 #fff;border-right-width:3px;line-height:18px;">SYSAUX</td><td style="height:21px;border-bottom-width:2px;padding-top:1px;box-shadow:inset 0 -1px 0 #fff;border-right-width:3px;line-height:18px;"><a class="lk">/u01/db1/datafile/</a>sysaux.341.852560</td><td class="r" style="height:21px;border-bottom-width:2px;padding-top:1px;box-shadow:inset 0 -1px 0 #fff;border-right-width:2px;line-height:18px;">4,998</td><td class="r" style="height:21px;border-bottom-width:2px;padding-top:1px;box-shadow:inset 0 -1px 0 #fff;border-right-width:3px;line-height:18px;">1</td><td class="r" style="height:21px;border-bottom-width:2px;padding-top:1px;box-shadow:inset 0 -1px 0 #fff;border-right-width:3px;line-height:18px;"><span class="hl">30.79</span></td><td class="r" style="height:21px;border-bottom-width:2px;padding-top:1px;box-shadow:inset 0 -1px 0 #fff;border-right-width:3px;line-height:18px;">1.00</td><td class="r" style="height:21px;border-bottom-width:2px;padding-top:1px;box-shadow:inset 0 -1px 0 #fff;border-right-width:3px;line-height:18px;">1</td><td class="r" style="height:21px;border-bottom-width:2px;padding-top:1px;box-shadow:inset 0 -1px 0 #fff;border-right-width:3px;line-height:18px;">30.79</td><td class="r" style="height:21px;border-bottom-width:2px;padding-top:1px;box-shadow:inset 0 -1px 0 #fff;border-right-width:2px;line-height:18px;">1,078</td><td class="r" style="height:21px;border-bottom-width:2px;padding-top:1px;box-shadow:inset 0 -1px 0 #fff;border-right-width:3px;line-height:18px;">0</td><td class="r" style="height:21px;border-bottom-width:2px;padding-top:1px;box-shadow:inset 0 -1px 0 #fff;border-right-width:2px;line-height:18px;">0</td><td class="r" style="height:21px;border-bottom-width:2px;padding-top:1px;box-shadow:inset 0 -1px 0 #fff;line-height:18px;">0.00</td></tr><tr class="y" style="height:21px"><td style="height:21px;border-bottom-width:2px;padding-top:1px;box-shadow:inset 0 -1px 0 #fff;border-right-width:3px;line-height:18px;">SYSTEM</td><td style="height:21px;border-bottom-width:2px;padding-top:1px;box-shadow:inset 0 -1px 0 #fff;border-right-width:3px;line-height:18px;"><a class="lk">/u01/db1/datafile/</a>system.291.846464</td><td class="r" style="height:21px;border-bottom-width:2px;padding-top:1px;box-shadow:inset 0 -1px 0 #fff;border-right-width:2px;line-height:18px;">3,149</td><td class="r" style="height:21px;border-bottom-width:2px;padding-top:1px;box-shadow:inset 0 -1px 0 #fff;border-right-width:3px;line-height:18px;">1</td><td class="r" style="height:21px;border-bottom-width:2px;padding-top:1px;box-shadow:inset 0 -1px 0 #fff;border-right-width:3px;line-height:18px;"><span class="hl">46.05</span></td><td class="r" style="height:21px;border-bottom-width:2px;padding-top:1px;box-shadow:inset 0 -1px 0 #fff;border-right-width:3px;line-height:18px;">1.02</td><td class="r" style="height:21px;border-bottom-width:2px;padding-top:1px;box-shadow:inset 0 -1px 0 #fff;border-right-width:3px;line-height:18px;">1</td><td class="r" style="height:21px;border-bottom-width:2px;padding-top:1px;box-shadow:inset 0 -1px 0 #fff;border-right-width:3px;line-height:18px;">46.08</td><td class="r" style="height:21px;border-bottom-width:2px;padding-top:1px;box-shadow:inset 0 -1px 0 #fff;border-right-width:2px;line-height:18px;">94</td><td class="r" style="height:21px;border-bottom-width:2px;padding-top:1px;box-shadow:inset 0 -1px 0 #fff;border-right-width:3px;line-height:18px;">0</td><td class="r" style="height:21px;border-bottom-width:2px;padding-top:1px;box-shadow:inset 0 -1px 0 #fff;border-right-width:2px;line-height:18px;">0</td><td class="r" style="height:21px;border-bottom-width:2px;padding-top:1px;box-shadow:inset 0 -1px 0 #fff;line-height:18px;">0.00</td></tr><tr style="height:21px"><td style="height:21px;border-bottom-width:2px;padding-top:1px;box-shadow:inset 0 -1px 0 #fff;border-right-width:3px;line-height:18px;">SYSTEM</td><td style="height:21px;border-bottom-width:2px;padding-top:1px;box-shadow:inset 0 -1px 0 #fff;border-right-width:3px;line-height:18px;"><a class="lk">/u01/db1/datafile/</a>system.313.849888</td><td class="r" style="height:21px;border-bottom-width:2px;padding-top:1px;box-shadow:inset 0 -1px 0 #fff;border-right-width:2px;line-height:18px;">1,545</td><td class="r" style="height:21px;border-bottom-width:2px;padding-top:1px;box-shadow:inset 0 -1px 0 #fff;border-right-width:3px;line-height:18px;">0</td><td class="r" style="height:21px;border-bottom-width:2px;padding-top:1px;box-shadow:inset 0 -1px 0 #fff;border-right-width:3px;line-height:18px;"><span class="hl">37.48</span></td><td class="r" style="height:21px;border-bottom-width:2px;padding-top:1px;box-shadow:inset 0 -1px 0 #fff;border-right-width:3px;line-height:18px;">1.01</td><td class="r" style="height:21px;border-bottom-width:2px;padding-top:1px;box-shadow:inset 0 -1px 0 #fff;border-right-width:3px;line-height:18px;">0</td><td class="r" style="height:21px;border-bottom-width:2px;padding-top:1px;box-shadow:inset 0 -1px 0 #fff;border-right-width:3px;line-height:18px;">37.51</td><td class="r" style="height:21px;border-bottom-width:2px;padding-top:1px;box-shadow:inset 0 -1px 0 #fff;border-right-width:2px;line-height:18px;">50</td><td class="r" style="height:21px;border-bottom-width:2px;padding-top:1px;box-shadow:inset 0 -1px 0 #fff;border-right-width:3px;line-height:18px;">0</td><td class="r" style="height:21px;border-bottom-width:2px;padding-top:1px;box-shadow:inset 0 -1px 0 #fff;border-right-width:2px;line-height:18px;">0</td><td class="r" style="height:21px;border-bottom-width:2px;padding-top:1px;box-shadow:inset 0 -1px 0 #fff;line-height:18px;">0.00</td></tr><tr class="y" style="height:21px"><td style="height:21px;border-bottom-width:2px;padding-top:1px;box-shadow:inset 0 -1px 0 #fff;border-right-width:3px;line-height:18px;">SYSTEM</td><td style="height:21px;border-bottom-width:2px;padding-top:1px;box-shadow:inset 0 -1px 0 #fff;border-right-width:3px;line-height:18px;"><a class="lk">/u01/db1/datafile/</a>system.340.852560</td><td class="r" style="height:21px;border-bottom-width:2px;padding-top:1px;box-shadow:inset 0 -1px 0 #fff;border-right-width:2px;line-height:18px;">1,154</td><td class="r" style="height:21px;border-bottom-width:2px;padding-top:1px;box-shadow:inset 0 -1px 0 #fff;border-right-width:3px;line-height:18px;">0</td><td class="r" style="height:21px;border-bottom-width:2px;padding-top:1px;box-shadow:inset 0 -1px 0 #fff;border-right-width:3px;line-height:18px;"><span class="hl">40.40</span></td><td class="r" style="height:21px;border-bottom-width:2px;padding-top:1px;box-shadow:inset 0 -1px 0 #fff;border-right-width:3px;line-height:18px;">1.04</td><td class="r" style="height:21px;border-bottom-width:2px;padding-top:1px;box-shadow:inset 0 -1px 0 #fff;border-right-width:3px;line-height:18px;">0</td><td class="r" style="height:21px;border-bottom-width:2px;padding-top:1px;box-shadow:inset 0 -1px 0 #fff;border-right-width:3px;line-height:18px;">40.68</td><td class="r" style="height:21px;border-bottom-width:2px;padding-top:1px;box-shadow:inset 0 -1px 0 #fff;border-right-width:2px;line-height:18px;">28</td><td class="r" style="height:21px;border-bottom-width:2px;padding-top:1px;box-shadow:inset 0 -1px 0 #fff;border-right-width:3px;line-height:18px;">0</td><td class="r" style="height:21px;border-bottom-width:2px;padding-top:1px;box-shadow:inset 0 -1px 0 #fff;border-right-width:2px;line-height:18px;">0</td><td class="r" style="height:21px;border-bottom-width:2px;padding-top:1px;box-shadow:inset 0 -1px 0 #fff;line-height:18px;">0.00</td></tr><tr style="height:21px"><td style="height:21px;border-bottom-width:2px;padding-top:1px;box-shadow:inset 0 -1px 0 #fff;border-right-width:3px;line-height:18px;">TEMP</td><td style="height:21px;border-bottom-width:2px;padding-top:1px;box-shadow:inset 0 -1px 0 #fff;border-right-width:3px;line-height:18px;"><a class="lk">/u01/db1/tempfile/</a>temp.288.8464645</td><td class="r" style="height:21px;border-bottom-width:2px;padding-top:1px;box-shadow:inset 0 -1px 0 #fff;border-right-width:2px;line-height:18px;">36</td><td class="r" style="height:21px;border-bottom-width:2px;padding-top:1px;box-shadow:inset 0 -1px 0 #fff;border-right-width:3px;line-height:18px;">0</td><td class="r" style="height:21px;border-bottom-width:2px;padding-top:1px;box-shadow:inset 0 -1px 0 #fff;border-right-width:3px;line-height:18px;"><span class="hl">19.72</span></td><td class="r" style="height:21px;border-bottom-width:2px;padding-top:1px;box-shadow:inset 0 -1px 0 #fff;border-right-width:3px;line-height:18px;">1.00</td><td class="r" style="height:21px;border-bottom-width:2px;padding-top:1px;box-shadow:inset 0 -1px 0 #fff;border-right-width:3px;line-height:18px;">0</td><td class="r" style="height:21px;border-bottom-width:2px;padding-top:1px;box-shadow:inset 0 -1px 0 #fff;border-right-width:3px;line-height:18px;">20.00</td><td class="r" style="height:21px;border-bottom-width:2px;padding-top:1px;box-shadow:inset 0 -1px 0 #fff;border-right-width:2px;line-height:18px;">130</td><td class="r" style="height:21px;border-bottom-width:2px;padding-top:1px;box-shadow:inset 0 -1px 0 #fff;border-right-width:3px;line-height:18px;">0</td><td class="r" style="height:21px;border-bottom-width:2px;padding-top:1px;box-shadow:inset 0 -1px 0 #fff;border-right-width:2px;line-height:18px;">0</td><td class="r" style="height:21px;border-bottom-width:2px;padding-top:1px;box-shadow:inset 0 -1px 0 #fff;line-height:18px;">0.00</td></tr><tr class="y" style="height:21px"><td style="height:21px;border-bottom-width:2px;padding-top:1px;box-shadow:inset 0 -1px 0 #fff;border-right-width:3px;line-height:18px;">TEMP</td><td style="height:21px;border-bottom-width:2px;padding-top:1px;box-shadow:inset 0 -1px 0 #fff;border-right-width:3px;line-height:18px;"><a class="lk">/u01/db1/tempfile/</a>temp.321.849888</td><td class="r" style="height:21px;border-bottom-width:2px;padding-top:1px;box-shadow:inset 0 -1px 0 #fff;border-right-width:2px;line-height:18px;">12</td><td class="r" style="height:21px;border-bottom-width:2px;padding-top:1px;box-shadow:inset 0 -1px 0 #fff;border-right-width:3px;line-height:18px;">0</td><td class="r" style="height:21px;border-bottom-width:2px;padding-top:1px;box-shadow:inset 0 -1px 0 #fff;border-right-width:3px;line-height:18px;"><span class="hl">55.83</span></td><td class="r" style="height:21px;border-bottom-width:2px;padding-top:1px;box-shadow:inset 0 -1px 0 #fff;border-right-width:3px;line-height:18px;">1.00</td><td class="r" style="height:21px;border-bottom-width:2px;padding-top:1px;box-shadow:inset 0 -1px 0 #fff;border-right-width:3px;line-height:18px;">0</td><td class="r" style="height:21px;border-bottom-width:2px;padding-top:1px;box-shadow:inset 0 -1px 0 #fff;border-right-width:3px;line-height:18px;">55.83</td><td class="r" style="height:21px;border-bottom-width:2px;padding-top:1px;box-shadow:inset 0 -1px 0 #fff;border-right-width:2px;line-height:18px;">128</td><td class="r" style="height:21px;border-bottom-width:2px;padding-top:1px;box-shadow:inset 0 -1px 0 #fff;border-right-width:3px;line-height:18px;">0</td><td class="r" style="height:21px;border-bottom-width:2px;padding-top:1px;box-shadow:inset 0 -1px 0 #fff;border-right-width:2px;line-height:18px;">0</td><td class="r" style="height:21px;border-bottom-width:2px;padding-top:1px;box-shadow:inset 0 -1px 0 #fff;line-height:18px;">0.00</td></tr><tr style="height:21px"><td style="height:21px;border-bottom-width:2px;padding-top:1px;box-shadow:inset 0 -1px 0 #fff;border-right-width:3px;line-height:18px;">TEMP</td><td style="height:21px;border-bottom-width:2px;padding-top:1px;box-shadow:inset 0 -1px 0 #fff;border-right-width:3px;line-height:18px;"><a class="lk">/u01/db1/tempfile/</a>temp.342.852560</td><td class="r" style="height:21px;border-bottom-width:2px;padding-top:1px;box-shadow:inset 0 -1px 0 #fff;border-right-width:2px;line-height:18px;">18</td><td class="r" style="height:21px;border-bottom-width:2px;padding-top:1px;box-shadow:inset 0 -1px 0 #fff;border-right-width:3px;line-height:18px;">0</td><td class="r" style="height:21px;border-bottom-width:2px;padding-top:1px;box-shadow:inset 0 -1px 0 #fff;border-right-width:3px;line-height:18px;"><span class="hl">14.44</span></td><td class="r" style="height:21px;border-bottom-width:2px;padding-top:1px;box-shadow:inset 0 -1px 0 #fff;border-right-width:3px;line-height:18px;">1.00</td><td class="r" style="height:21px;border-bottom-width:2px;padding-top:1px;box-shadow:inset 0 -1px 0 #fff;border-right-width:3px;line-height:18px;">0</td><td class="r" style="height:21px;border-bottom-width:2px;padding-top:1px;box-shadow:inset 0 -1px 0 #fff;border-right-width:3px;line-height:18px;">14.44</td><td class="r" style="height:21px;border-bottom-width:2px;padding-top:1px;box-shadow:inset 0 -1px 0 #fff;border-right-width:2px;line-height:18px;">120</td><td class="r" style="height:21px;border-bottom-width:2px;padding-top:1px;box-shadow:inset 0 -1px 0 #fff;border-right-width:3px;line-height:18px;">0</td><td class="r" style="height:21px;border-bottom-width:2px;padding-top:1px;box-shadow:inset 0 -1px 0 #fff;border-right-width:2px;line-height:18px;">0</td><td class="r" style="height:21px;border-bottom-width:2px;padding-top:1px;box-shadow:inset 0 -1px 0 #fff;line-height:18px;">0.00</td></tr><tr class="y" style="height:21px"><td style="height:21px;border-bottom-width:2px;padding-top:1px;box-shadow:inset 0 -1px 0 #fff;border-right-width:3px;line-height:18px;">UNDOTBS1</td><td style="height:21px;border-bottom-width:2px;padding-top:1px;box-shadow:inset 0 -1px 0 #fff;border-right-width:3px;line-height:18px;"><a class="lk">/u01/db1/datafile/</a>undotbs1.289.846464</td><td class="r" style="height:21px;border-bottom-width:2px;padding-top:1px;box-shadow:inset 0 -1px 0 #fff;border-right-width:2px;line-height:18px;">5</td><td class="r" style="height:21px;border-bottom-width:2px;padding-top:1px;box-shadow:inset 0 -1px 0 #fff;border-right-width:3px;line-height:18px;">0</td><td class="r" style="height:21px;border-bottom-width:2px;padding-top:1px;box-shadow:inset 0 -1px 0 #fff;border-right-width:3px;line-height:18px;"><span class="hl">0.00</span></td><td class="r" style="height:21px;border-bottom-width:2px;padding-top:1px;box-shadow:inset 0 -1px 0 #fff;border-right-width:3px;line-height:18px;">1.00</td><td class="r" style="height:21px;border-bottom-width:2px;padding-top:1px;box-shadow:inset 0 -1px 0 #fff;border-right-width:3px;line-height:18px;">0</td><td class="r" style="height:21px;border-bottom-width:2px;padding-top:1px;box-shadow:inset 0 -1px 0 #fff;border-right-width:3px;line-height:18px;">0.00</td><td class="r" style="height:21px;border-bottom-width:2px;padding-top:1px;box-shadow:inset 0 -1px 0 #fff;border-right-width:2px;line-height:18px;">5</td><td class="r" style="height:21px;border-bottom-width:2px;padding-top:1px;box-shadow:inset 0 -1px 0 #fff;border-right-width:3px;line-height:18px;">0</td><td class="r" style="height:21px;border-bottom-width:2px;padding-top:1px;box-shadow:inset 0 -1px 0 #fff;border-right-width:2px;line-height:18px;">0</td><td class="r" style="height:21px;border-bottom-width:2px;padding-top:1px;box-shadow:inset 0 -1px 0 #fff;line-height:18px;">0.00</td></tr><tr style="height:21px"><td style="height:21px;border-bottom-width:2px;padding-top:1px;box-shadow:inset 0 -1px 0 #fff;border-right-width:3px;line-height:18px;">UNDOTBS1</td><td style="height:21px;border-bottom-width:2px;padding-top:1px;box-shadow:inset 0 -1px 0 #fff;border-right-width:3px;line-height:18px;"><a class="lk">/u01/db1/datafile/</a>undotbs1.435.866004</td><td class="r" style="height:21px;border-bottom-width:2px;padding-top:1px;box-shadow:inset 0 -1px 0 #fff;border-right-width:2px;line-height:18px;">15</td><td class="r" style="height:21px;border-bottom-width:2px;padding-top:1px;box-shadow:inset 0 -1px 0 #fff;border-right-width:3px;line-height:18px;">0</td><td class="r" style="height:21px;border-bottom-width:2px;padding-top:1px;box-shadow:inset 0 -1px 0 #fff;border-right-width:3px;line-height:18px;"><span class="hl">0.00</span></td><td class="r" style="height:21px;border-bottom-width:2px;padding-top:1px;box-shadow:inset 0 -1px 0 #fff;border-right-width:3px;line-height:18px;">1.00</td><td class="r" style="height:21px;border-bottom-width:2px;padding-top:1px;box-shadow:inset 0 -1px 0 #fff;border-right-width:3px;line-height:18px;">0</td><td class="r" style="height:21px;border-bottom-width:2px;padding-top:1px;box-shadow:inset 0 -1px 0 #fff;border-right-width:3px;line-height:18px;">0.00</td><td class="r" style="height:21px;border-bottom-width:2px;padding-top:1px;box-shadow:inset 0 -1px 0 #fff;border-right-width:2px;line-height:18px;">5</td><td class="r" style="height:21px;border-bottom-width:2px;padding-top:1px;box-shadow:inset 0 -1px 0 #fff;border-right-width:3px;line-height:18px;">0</td><td class="r" style="height:21px;border-bottom-width:2px;padding-top:1px;box-shadow:inset 0 -1px 0 #fff;border-right-width:2px;line-height:18px;">0</td><td class="r" style="height:21px;border-bottom-width:2px;padding-top:1px;box-shadow:inset 0 -1px 0 #fff;line-height:18px;">0.00</td></tr><tr class="y" style="height:21px"><td style="height:21px;border-bottom-width:2px;padding-top:1px;box-shadow:inset 0 -1px 0 #fff;border-right-width:3px;line-height:18px;">UNDOTBS1</td><td style="height:21px;border-bottom-width:2px;padding-top:1px;box-shadow:inset 0 -1px 0 #fff;border-right-width:3px;line-height:18px;"><a class="lk">/u01/db1/datafile/</a>undotbs1.436.866071</td><td class="r" style="height:21px;border-bottom-width:2px;padding-top:1px;box-shadow:inset 0 -1px 0 #fff;border-right-width:2px;line-height:18px;">15</td><td class="r" style="height:21px;border-bottom-width:2px;padding-top:1px;box-shadow:inset 0 -1px 0 #fff;border-right-width:3px;line-height:18px;">0</td><td class="r" style="height:21px;border-bottom-width:2px;padding-top:1px;box-shadow:inset 0 -1px 0 #fff;border-right-width:3px;line-height:18px;"><span class="hl">0.00</span></td><td class="r" style="height:21px;border-bottom-width:2px;padding-top:1px;box-shadow:inset 0 -1px 0 #fff;border-right-width:3px;line-height:18px;">1.00</td><td class="r" style="height:21px;border-bottom-width:2px;padding-top:1px;box-shadow:inset 0 -1px 0 #fff;border-right-width:3px;line-height:18px;">0</td><td class="r" style="height:21px;border-bottom-width:2px;padding-top:1px;box-shadow:inset 0 -1px 0 #fff;border-right-width:3px;line-height:18px;">0.00</td><td class="r" style="height:21px;border-bottom-width:2px;padding-top:1px;box-shadow:inset 0 -1px 0 #fff;border-right-width:2px;line-height:18px;">5</td><td class="r" style="height:21px;border-bottom-width:2px;padding-top:1px;box-shadow:inset 0 -1px 0 #fff;border-right-width:3px;line-height:18px;">0</td><td class="r" style="height:21px;border-bottom-width:2px;padding-top:1px;box-shadow:inset 0 -1px 0 #fff;border-right-width:2px;line-height:18px;">0</td><td class="r" style="height:21px;border-bottom-width:2px;padding-top:1px;box-shadow:inset 0 -1px 0 #fff;line-height:18px;">0.00</td></tr><tr style="height:21px"><td style="height:21px;border-bottom-width:2px;padding-top:1px;box-shadow:inset 0 -1px 0 #fff;border-right-width:3px;line-height:18px;">UNDOTBS2</td><td style="height:21px;border-bottom-width:2px;padding-top:1px;box-shadow:inset 0 -1px 0 #fff;border-right-width:3px;line-height:18px;"><a class="lk">/u01/db1/datafile/</a>undotbs2.287.846464</td><td class="r" style="height:21px;border-bottom-width:2px;padding-top:1px;box-shadow:inset 0 -1px 0 #fff;border-right-width:2px;line-height:18px;">191</td><td class="r" style="height:21px;border-bottom-width:2px;padding-top:1px;box-shadow:inset 0 -1px 0 #fff;border-right-width:3px;line-height:18px;">0</td><td class="r" style="height:21px;border-bottom-width:2px;padding-top:1px;box-shadow:inset 0 -1px 0 #fff;border-right-width:3px;line-height:18px;"><span class="hl">114.40</span></td><td class="r" style="height:21px;border-bottom-width:2px;padding-top:1px;box-shadow:inset 0 -1px 0 #fff;border-right-width:3px;line-height:18px;">1.00</td><td class="r" style="height:21px;border-bottom-width:2px;padding-top:1px;box-shadow:inset 0 -1px 0 #fff;border-right-width:3px;line-height:18px;">0</td><td class="r" style="height:21px;border-bottom-width:2px;padding-top:1px;box-shadow:inset 0 -1px 0 #fff;border-right-width:3px;line-height:18px;">114.35</td><td class="r" style="height:21px;border-bottom-width:2px;padding-top:1px;box-shadow:inset 0 -1px 0 #fff;border-right-width:2px;line-height:18px;">13,145</td><td class="r" style="height:21px;border-bottom-width:2px;padding-top:1px;box-shadow:inset 0 -1px 0 #fff;border-right-width:3px;line-height:18px;">3</td><td class="r" style="height:21px;border-bottom-width:2px;padding-top:1px;box-shadow:inset 0 -1px 0 #fff;border-right-width:2px;line-height:18px;">0</td><td class="r" style="height:21px;border-bottom-width:2px;padding-top:1px;box-shadow:inset 0 -1px 0 #fff;line-height:18px;">0.00</td></tr><tr class="y" style="height:21px"><td style="height:21px;border-bottom-width:2px;padding-top:1px;box-shadow:inset 0 -1px 0 #fff;border-right-width:3px;line-height:18px;">UNDOTBS2</td><td style="height:21px;border-bottom-width:2px;padding-top:1px;box-shadow:inset 0 -1px 0 #fff;border-right-width:3px;line-height:18px;"><a class="lk">/u01/db1/datafile/</a>undotbs2.400.859350</td><td class="r" style="height:21px;border-bottom-width:2px;padding-top:1px;box-shadow:inset 0 -1px 0 #fff;border-right-width:2px;line-height:18px;">248</td><td class="r" style="height:21px;border-bottom-width:2px;padding-top:1px;box-shadow:inset 0 -1px 0 #fff;border-right-width:3px;line-height:18px;">0</td><td class="r" style="height:21px;border-bottom-width:2px;padding-top:1px;box-shadow:inset 0 -1px 0 #fff;border-right-width:3px;line-height:18px;"><span class="hl">108.63</span></td><td class="r" style="height:21px;border-bottom-width:2px;padding-top:1px;box-shadow:inset 0 -1px 0 #fff;border-right-width:3px;line-height:18px;">1.00</td><td class="r" style="height:21px;border-bottom-width:2px;padding-top:1px;box-shadow:inset 0 -1px 0 #fff;border-right-width:3px;line-height:18px;">0</td><td class="r" style="height:21px;border-bottom-width:2px;padding-top:1px;box-shadow:inset 0 -1px 0 #fff;border-right-width:3px;line-height:18px;">108.63</td><td class="r" style="height:21px;border-bottom-width:2px;padding-top:1px;box-shadow:inset 0 -1px 0 #fff;border-right-width:2px;line-height:18px;">11,677</td><td class="r" style="height:21px;border-bottom-width:2px;padding-top:1px;box-shadow:inset 0 -1px 0 #fff;border-right-width:3px;line-height:18px;">3</td><td class="r" style="height:21px;border-bottom-width:2px;padding-top:1px;box-shadow:inset 0 -1px 0 #fff;border-right-width:2px;line-height:18px;">0</td><td class="r" style="height:21px;border-bottom-width:2px;padding-top:1px;box-shadow:inset 0 -1px 0 #fff;line-height:18px;">0.00</td></tr><tr style="height:21px"><td style="height:21px;border-bottom-width:2px;padding-top:1px;box-shadow:inset 0 -1px 0 #fff;border-right-width:3px;line-height:18px;">UNDOTBS2</td><td style="height:21px;border-bottom-width:2px;padding-top:1px;box-shadow:inset 0 -1px 0 #fff;border-right-width:3px;line-height:18px;"><a class="lk">/u01/db1/datafile/</a>undotbs2.437.866072</td><td class="r" style="height:21px;border-bottom-width:2px;padding-top:1px;box-shadow:inset 0 -1px 0 #fff;border-right-width:2px;line-height:18px;">178</td><td class="r" style="height:21px;border-bottom-width:2px;padding-top:1px;box-shadow:inset 0 -1px 0 #fff;border-right-width:3px;line-height:18px;">0</td><td class="r" style="height:21px;border-bottom-width:2px;padding-top:1px;box-shadow:inset 0 -1px 0 #fff;border-right-width:3px;line-height:18px;"><span class="hl">108.54</span></td><td class="r" style="height:21px;border-bottom-width:2px;padding-top:1px;box-shadow:inset 0 -1px 0 #fff;border-right-width:3px;line-height:18px;">1.00</td><td class="r" style="height:21px;border-bottom-width:2px;padding-top:1px;box-shadow:inset 0 -1px 0 #fff;border-right-width:3px;line-height:18px;">0</td><td class="r" style="height:21px;border-bottom-width:2px;padding-top:1px;box-shadow:inset 0 -1px 0 #fff;border-right-width:3px;line-height:18px;">108.54</td><td class="r" style="height:21px;border-bottom-width:2px;padding-top:1px;box-shadow:inset 0 -1px 0 #fff;border-right-width:2px;line-height:18px;">10,941</td><td class="r" style="height:21px;border-bottom-width:2px;padding-top:1px;box-shadow:inset 0 -1px 0 #fff;border-right-width:3px;line-height:18px;">3</td><td class="r" style="height:21px;border-bottom-width:2px;padding-top:1px;box-shadow:inset 0 -1px 0 #fff;border-right-width:2px;line-height:18px;">0</td><td class="r" style="height:21px;border-bottom-width:2px;padding-top:1px;box-shadow:inset 0 -1px 0 #fff;line-height:18px;">0.00</td></tr><tr class="y" style="height:19px"><td style="height:19px;padding-top:1px;box-shadow:inset 0 -1px 0 #fff;border-right-width:3px;line-height:18px;">USERS</td><td style="height:19px;padding-top:1px;box-shadow:inset 0 -1px 0 #fff;border-right-width:3px;line-height:18px;"><a class="lk">/u01/db1/datafile/</a>users.286.846464</td><td class="r" style="height:19px;padding-top:1px;box-shadow:inset 0 -1px 0 #fff;border-right-width:2px;line-height:18px;">5</td><td class="r" style="height:19px;padding-top:1px;box-shadow:inset 0 -1px 0 #fff;border-right-width:3px;line-height:18px;">0</td><td class="r" style="height:19px;padding-top:1px;box-shadow:inset 0 -1px 0 #fff;border-right-width:3px;line-height:18px;"><span class="hl">0.00</span></td><td class="r" style="height:19px;padding-top:1px;box-shadow:inset 0 -1px 0 #fff;border-right-width:3px;line-height:18px;">1.00</td><td class="r" style="height:19px;padding-top:1px;box-shadow:inset 0 -1px 0 #fff;border-right-width:3px;line-height:18px;">0</td><td class="r" style="height:19px;padding-top:1px;box-shadow:inset 0 -1px 0 #fff;border-right-width:3px;line-height:18px;">0.00</td><td class="r" style="height:19px;padding-top:1px;box-shadow:inset 0 -1px 0 #fff;border-right-width:2px;line-height:18px;">5</td><td class="r" style="height:19px;padding-top:1px;box-shadow:inset 0 -1px 0 #fff;border-right-width:3px;line-height:18px;">0</td><td class="r" style="height:19px;padding-top:1px;box-shadow:inset 0 -1px 0 #fff;border-right-width:2px;line-height:18px;">0</td><td class="r" style="height:19px;padding-top:1px;box-shadow:inset 0 -1px 0 #fff;line-height:18px;">0.00</td></tr></table>
</div>
<svg class="abs" style="left:990px;top:640px" width="140" height="240" viewBox="990 640 140 240">
<polyline points="997.5,871.700 1023,871.700 1034,869.500 1044.200,866.300 1051.300,862.200 1058,861 1065.400,856.800 1074.800,847.400 1084.300,835.600 1093.700,823.800 1101.900,814.400 1104.300,806.200 1107.800,795.600 1109.700,781.400 1110.200,765 1110.200,750.800 1105,741.300 1103.500,730 1101.900,717.800 1098.900,701.300 1098.400,680 1098.400,658.900 1099.500,652 1100.800,649.400" fill="none" stroke="#0a0a0a" stroke-width="1.050" stroke-linejoin="round"/>
<polyline points="1080.700,662.400 1087,659 1093.700,654.600 1098,650.500 1103,649.600 1106,654 1110.200,658.900 1115,663 1119.200,664.700" fill="none" stroke="#0a0a0a" stroke-width="1.050" stroke-linejoin="round"/>
</svg>
</div>
<div class="abs" style="left:0;top:1011px;width:1675px;height:2px;background:linear-gradient(#c4c8c6,#4f5861);"></div>
<div class="abs" style="left:0;top:1013px;width:1675px;height:5px;background:#a9bdd9;overflow:hidden;"></div>
<div class="abs" style="left:3px;top:1013px;width:38px;height:30px;border-radius:50%;box-sizing:border-box;border:1px solid #5d7391;background:#cfdcee;"></div>
<div class="abs" style="left:55px;top:1013px;width:58px;height:8px;box-sizing:border-box;border:1px solid #66788f;border-radius:3px 3px 0 0;background:#d3dfef;box-shadow:inset 0 1px 0 #eef3fa;"></div><div class="abs" style="left:117px;top:1013px;width:58px;height:8px;box-sizing:border-box;border:1px solid #66788f;border-radius:3px 3px 0 0;background:#d3dfef;box-shadow:inset 0 1px 0 #eef3fa;"></div><div class="abs" style="left:179px;top:1013px;width:58px;height:8px;box-sizing:border-box;border:1px solid #66788f;border-radius:3px 3px 0 0;background:#d3dfef;box-shadow:inset 0 1px 0 #eef3fa;"></div><div class="abs" style="left:241px;top:1013px;width:58px;height:8px;box-sizing:border-box;border:1px solid #66788f;border-radius:3px 3px 0 0;background:#d3dfef;box-shadow:inset 0 1px 0 #eef3fa;"></div><div class="abs" style="left:303px;top:1013px;width:58px;height:8px;box-sizing:border-box;border:1px solid #66788f;border-radius:3px 3px 0 0;background:#d3dfef;box-shadow:inset 0 1px 0 #eef3fa;"></div><div class="abs" style="left:365px;top:1013px;width:58px;height:8px;box-sizing:border-box;border:1px solid #66788f;border-radius:3px 3px 0 0;background:#d3dfef;box-shadow:inset 0 1px 0 #eef3fa;"></div><div class="abs" style="left:427px;top:1013px;width:58px;height:8px;box-sizing:border-box;border:1px solid #66788f;border-radius:3px 3px 0 0;background:#d3dfef;box-shadow:inset 0 1px 0 #eef3fa;"></div><div class="abs" style="left:489px;top:1013px;width:58px;height:8px;box-sizing:border-box;border:1px solid #66788f;border-radius:3px 3px 0 0;background:#d3dfef;box-shadow:inset 0 1px 0 #eef3fa;"></div><div class="abs" style="left:551px;top:1013px;width:58px;height:8px;box-sizing:border-box;border:1px solid #66788f;border-radius:3px 3px 0 0;background:#d3dfef;box-shadow:inset 0 1px 0 #eef3fa;"></div><div class="abs" style="left:613px;top:1013px;width:58px;height:8px;box-sizing:border-box;border:1px solid #66788f;border-radius:3px 3px 0 0;background:#d3dfef;box-shadow:inset 0 1px 0 #eef3fa;"></div><div class="abs" style="left:675px;top:1013px;width:58px;height:8px;box-sizing:border-box;border:1px solid #66788f;border-radius:3px 3px 0 0;background:#d3dfef;box-shadow:inset 0 1px 0 #eef3fa;"></div><div class="abs" style="left:737px;top:1013px;width:58px;height:8px;box-sizing:border-box;border:1px solid #66788f;border-radius:3px 3px 0 0;background:#d3dfef;box-shadow:inset 0 1px 0 #eef3fa;"></div>

</body></html>
